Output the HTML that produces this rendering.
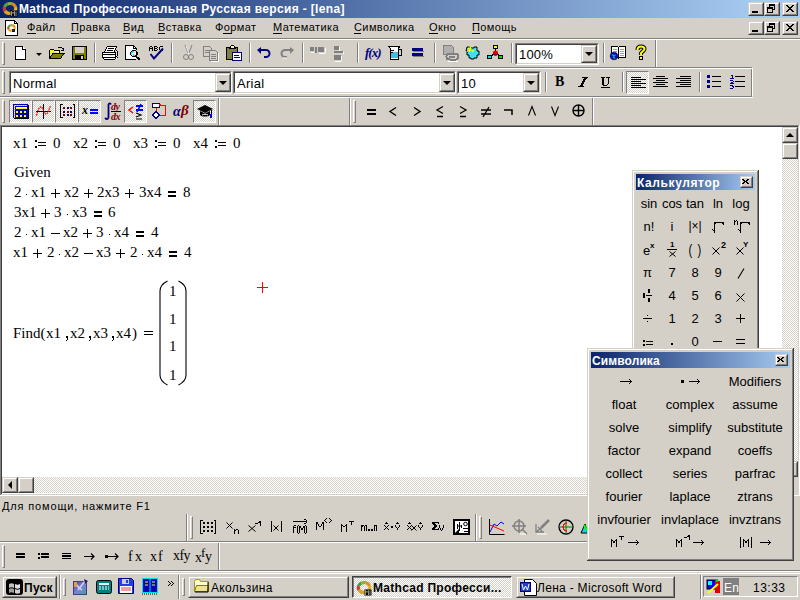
<!DOCTYPE html><html><head><meta charset="utf-8"><style>
*{margin:0;padding:0;box-sizing:border-box}
html,body{width:800px;height:600px;overflow:hidden;background:#D4D0C8;font-family:"Liberation Sans",sans-serif;font-size:11px;color:#000;position:relative}
.a{position:absolute}
.t{position:absolute;white-space:nowrap;line-height:1}
.hl{position:absolute;height:1px}
.vl{position:absolute;width:1px}
.dk{background:#808080}.wh{background:#fff}.dd{background:#404040}.bf{background:#D4D0C8}
.title{left:0;top:0;width:800px;height:18px;background:linear-gradient(to right,#0A246A 0px,#A6CAF0 760px)}
.cbtn{position:absolute;width:16px;height:14px;background:#D4D0C8;border-top:1px solid #fff;border-left:1px solid #fff;border-right:1px solid #404040;border-bottom:1px solid #404040;box-shadow:inset -1px -1px #808080}
.grip{position:absolute;width:3px;border-left:1px solid #fff;border-top:1px solid #fff;border-right:1px solid #808080;border-bottom:1px solid #808080}
.sep{position:absolute;width:2px;border-left:1px solid #808080;border-right:1px solid #fff}
.chk{background-color:#fff;background-image:linear-gradient(45deg,#D4D0C8 25%,transparent 25%,transparent 75%,#D4D0C8 75%),linear-gradient(45deg,#D4D0C8 25%,transparent 25%,transparent 75%,#D4D0C8 75%);background-size:2px 2px;background-position:0 0,1px 1px}
.pressed{position:absolute;border-top:1px solid #808080;border-left:1px solid #808080;border-right:1px solid #fff;border-bottom:1px solid #fff}
.combo{position:absolute;background:#fff;border-top:1px solid #808080;border-left:1px solid #808080;border-right:1px solid #fff;border-bottom:1px solid #fff}
.combo>.in{position:absolute;left:0;top:0;right:0;bottom:0;border-top:1px solid #404040;border-left:1px solid #404040;border-right:1px solid #D4D0C8;border-bottom:1px solid #D4D0C8}
.ddb{position:absolute;background:#D4D0C8;border-top:1px solid #D4D0C8;border-left:1px solid #D4D0C8;border-right:1px solid #404040;border-bottom:1px solid #404040}
.ddb>.in{position:absolute;left:0;top:0;right:0;bottom:0;border-top:1px solid #fff;border-left:1px solid #fff;border-right:1px solid #808080;border-bottom:1px solid #808080}
.tri{position:absolute;width:0;height:0;border-left:4px solid transparent;border-right:4px solid transparent;border-top:4px solid #000}
.btn3d{position:absolute;background:#D4D0C8;border-top:1px solid #D4D0C8;border-left:1px solid #D4D0C8;border-right:1px solid #404040;border-bottom:1px solid #404040}
.btn3d>.in{position:absolute;left:0;top:0;right:0;bottom:0;border-top:1px solid #fff;border-left:1px solid #fff;border-right:1px solid #808080;border-bottom:1px solid #808080}
.m{position:absolute;font-family:"Liberation Serif",serif;font-size:14px;white-space:nowrap;line-height:1}
.ptitle{position:absolute;background:linear-gradient(to right,#0A246A,#A6CAF0)}
.pt{position:absolute;font-size:12px;white-space:nowrap;line-height:1;text-align:center}
svg{position:absolute;overflow:visible}
</style></head><body>
<div class="a title"></div>
<svg style="left:2px;top:1px" width="16" height="16" viewBox="0 0 16 16"><path d="M2.98 10.00A5.8 5 0 0 1 2.55 5.79" stroke="#d03838" stroke-width="3.2" fill="none"/><path d="M2.55 5.79A5.8 5 0 0 1 5.55 2.97" stroke="#50a040" stroke-width="3.2" fill="none"/><path d="M5.55 2.97A5.8 5 0 0 1 9.98 2.80" stroke="#90b030" stroke-width="3.2" fill="none"/><path d="M9.98 2.80A5.8 5 0 0 1 13.45 5.79" stroke="#e08828" stroke-width="3.2" fill="none"/><path d="M13.45 5.79A5.8 5 0 0 1 13.02 10.00" stroke="#e8b020" stroke-width="3.2" fill="none"/><path d="M13.02 10.00A5.8 5 0 0 1 8.00 12.50" stroke="#e0d020" stroke-width="3.2" fill="none"/><path d="M8.00 12.50A5.8 5 0 0 1 2.98 10.00" stroke="#e0a020" stroke-width="3.2" fill="none"/><path d="M8.5 9.5h7v6h-7z" fill="#000"/><path d="M9.5 15v-4.5l1.5 2l1.5-2v4.5M14 10.5v4.5" stroke="#a0a0a0" fill="none" stroke-width="0.9"/></svg>
<div class="t" style="left:19px;top:3px;color:#fff;font-weight:bold;font-size:12px;letter-spacing:0.35px">Mathcad Профессиональная Русская версия - [lena]</div>
<div class="btn3d" style="left:748px;top:2px;width:16px;height:14px"><div class="in"></div><svg style="left:-1px;top:-1px" width="16" height="14" viewBox="0 0 16 14" shape-rendering="crispEdges"><rect x="4" y="9" width="6" height="2" fill="#000"/></svg></div>
<div class="btn3d" style="left:764px;top:2px;width:16px;height:14px"><div class="in"></div><svg style="left:-1px;top:-1px" width="16" height="14" viewBox="0 0 16 14" shape-rendering="crispEdges"><rect x="5" y="2" width="6" height="1" fill="#000"/><rect x="5" y="3" width="6" height="1" fill="#000"/><rect x="5" y="4" width="1" height="1" fill="#000"/><rect x="10" y="4" width="1" height="1" fill="#000"/><rect x="5" y="5" width="1" height="1" fill="#000"/><rect x="10" y="5" width="1" height="1" fill="#000"/><rect x="5" y="6" width="1" height="1" fill="#000"/><rect x="10" y="6" width="1" height="1" fill="#000"/><rect x="5" y="7" width="6" height="1" fill="#000"/><rect x="4" y="7" width="4" height="3" fill="#D4D0C8"/><rect x="3" y="5" width="6" height="1" fill="#000"/><rect x="3" y="6" width="6" height="1" fill="#000"/><rect x="3" y="7" width="1" height="1" fill="#000"/><rect x="8" y="7" width="1" height="1" fill="#000"/><rect x="3" y="8" width="1" height="1" fill="#000"/><rect x="8" y="8" width="1" height="1" fill="#000"/><rect x="3" y="9" width="1" height="1" fill="#000"/><rect x="8" y="9" width="1" height="1" fill="#000"/><rect x="3" y="10" width="6" height="1" fill="#000"/></svg></div>
<div class="btn3d" style="left:782px;top:2px;width:16px;height:14px"><div class="in"></div><svg style="left:-1px;top:-1px" width="16" height="14" viewBox="0 0 16 14" shape-rendering="crispEdges"><rect x="4" y="3" width="2" height="1" fill="#000"/><rect x="10" y="3" width="2" height="1" fill="#000"/><rect x="5" y="4" width="2" height="1" fill="#000"/><rect x="9" y="4" width="2" height="1" fill="#000"/><rect x="6" y="5" width="4" height="1" fill="#000"/><rect x="7" y="6" width="2" height="1" fill="#000"/><rect x="6" y="7" width="4" height="1" fill="#000"/><rect x="5" y="8" width="2" height="1" fill="#000"/><rect x="9" y="8" width="2" height="1" fill="#000"/><rect x="4" y="9" width="2" height="1" fill="#000"/><rect x="10" y="9" width="2" height="1" fill="#000"/></svg></div>
<svg style="left:4px;top:20px" width="16" height="16" viewBox="0 0 16 16" shape-rendering="crispEdges">
<path d="M1.5 0.5h9l3 3v11.5h-12z" fill="#fff" stroke="#000"/><path d="M10.5 0.5v3h3" fill="none" stroke="#000"/>
</svg>
<svg style="left:4px;top:20px" width="16" height="16" viewBox="0 0 16 16"><path d="M4.73 9.40A3.2 2.8 0 0 1 4.49 7.04" stroke="#d03838" stroke-width="2.2" fill="none"/><path d="M4.49 7.04A3.2 2.8 0 0 1 6.15 5.46" stroke="#50a040" stroke-width="2.2" fill="none"/><path d="M6.15 5.46A3.2 2.8 0 0 1 8.59 5.37" stroke="#90b030" stroke-width="2.2" fill="none"/><path d="M8.59 5.37A3.2 2.8 0 0 1 10.51 7.04" stroke="#e08828" stroke-width="2.2" fill="none"/><path d="M10.51 7.04A3.2 2.8 0 0 1 10.27 9.40" stroke="#e8b020" stroke-width="2.2" fill="none"/><path d="M10.27 9.40A3.2 2.8 0 0 1 7.50 10.80" stroke="#e0d020" stroke-width="2.2" fill="none"/><path d="M7.50 10.80A3.2 2.8 0 0 1 4.73 9.40" stroke="#e0a020" stroke-width="2.2" fill="none"/><rect x="8" y="9" width="3" height="3" fill="#202020"/></svg>
<div class="t" style="left:27px;top:22px;font-size:11px;letter-spacing:0.4px">Файл</div>
<div class="t" style="left:71px;top:22px;font-size:11px;letter-spacing:0.4px">Правка</div>
<div class="t" style="left:123px;top:22px;font-size:11px;letter-spacing:0.4px">Вид</div>
<div class="t" style="left:158px;top:22px;font-size:11px;letter-spacing:0.4px">Вставка</div>
<div class="t" style="left:215px;top:22px;font-size:11px;letter-spacing:0.4px">Формат</div>
<div class="t" style="left:273px;top:22px;font-size:11px;letter-spacing:0.4px">Математика</div>
<div class="t" style="left:354px;top:22px;font-size:11px;letter-spacing:0.4px">Символика</div>
<div class="t" style="left:429px;top:22px;font-size:11px;letter-spacing:0.4px">Окно</div>
<div class="t" style="left:472px;top:22px;font-size:11px;letter-spacing:0.4px">Помощь</div>
<div class="hl" style="left:27px;top:33px;width:9px;background:#000"></div>
<div class="hl" style="left:71px;top:33px;width:8px;background:#000"></div>
<div class="hl" style="left:123px;top:33px;width:7px;background:#000"></div>
<div class="hl" style="left:158px;top:33px;width:7px;background:#000"></div>
<div class="hl" style="left:223px;top:33px;width:9px;background:#000"></div>
<div class="hl" style="left:273px;top:33px;width:9px;background:#000"></div>
<div class="hl" style="left:354px;top:33px;width:7px;background:#000"></div>
<div class="hl" style="left:429px;top:33px;width:9px;background:#000"></div>
<div class="hl" style="left:472px;top:33px;width:8px;background:#000"></div>
<div class="btn3d" style="left:748px;top:21px;width:16px;height:14px"><div class="in"></div><svg style="left:-1px;top:-1px" width="16" height="14" viewBox="0 0 16 14" shape-rendering="crispEdges"><rect x="4" y="9" width="6" height="2" fill="#000"/></svg></div>
<div class="btn3d" style="left:764px;top:21px;width:16px;height:14px"><div class="in"></div><svg style="left:-1px;top:-1px" width="16" height="14" viewBox="0 0 16 14" shape-rendering="crispEdges"><rect x="5" y="2" width="6" height="1" fill="#000"/><rect x="5" y="3" width="6" height="1" fill="#000"/><rect x="5" y="4" width="1" height="1" fill="#000"/><rect x="10" y="4" width="1" height="1" fill="#000"/><rect x="5" y="5" width="1" height="1" fill="#000"/><rect x="10" y="5" width="1" height="1" fill="#000"/><rect x="5" y="6" width="1" height="1" fill="#000"/><rect x="10" y="6" width="1" height="1" fill="#000"/><rect x="5" y="7" width="6" height="1" fill="#000"/><rect x="4" y="7" width="4" height="3" fill="#D4D0C8"/><rect x="3" y="5" width="6" height="1" fill="#000"/><rect x="3" y="6" width="6" height="1" fill="#000"/><rect x="3" y="7" width="1" height="1" fill="#000"/><rect x="8" y="7" width="1" height="1" fill="#000"/><rect x="3" y="8" width="1" height="1" fill="#000"/><rect x="8" y="8" width="1" height="1" fill="#000"/><rect x="3" y="9" width="1" height="1" fill="#000"/><rect x="8" y="9" width="1" height="1" fill="#000"/><rect x="3" y="10" width="6" height="1" fill="#000"/></svg></div>
<div class="btn3d" style="left:782px;top:21px;width:16px;height:14px"><div class="in"></div><svg style="left:-1px;top:-1px" width="16" height="14" viewBox="0 0 16 14" shape-rendering="crispEdges"><rect x="4" y="3" width="2" height="1" fill="#000"/><rect x="10" y="3" width="2" height="1" fill="#000"/><rect x="5" y="4" width="2" height="1" fill="#000"/><rect x="9" y="4" width="2" height="1" fill="#000"/><rect x="6" y="5" width="4" height="1" fill="#000"/><rect x="7" y="6" width="2" height="1" fill="#000"/><rect x="6" y="7" width="4" height="1" fill="#000"/><rect x="5" y="8" width="2" height="1" fill="#000"/><rect x="9" y="8" width="2" height="1" fill="#000"/><rect x="4" y="9" width="2" height="1" fill="#000"/><rect x="10" y="9" width="2" height="1" fill="#000"/></svg></div>
<div class="hl" style="left:0px;top:38px;width:800px;background:#808080"></div>
<div class="hl" style="left:0px;top:39px;width:800px;background:#fff"></div>
<div class="vl" style="left:655px;top:40px;height:27px;background:#808080"></div>
<div class="vl" style="left:656px;top:40px;height:27px;background:#fff"></div>
<div class="hl" style="left:0px;top:67px;width:752px;background:#808080"></div>
<div class="hl" style="left:0px;top:68px;width:753px;background:#fff"></div>
<div class="vl" style="left:751px;top:69px;height:27px;background:#808080"></div>
<div class="vl" style="left:752px;top:68px;height:28px;background:#fff"></div>
<div class="hl" style="left:0px;top:96px;width:752px;background:#808080"></div>
<div class="hl" style="left:0px;top:97px;width:753px;background:#fff"></div>
<div class="vl" style="left:218px;top:98px;height:27px;background:#808080"></div>
<div class="vl" style="left:219px;top:98px;height:27px;background:#fff"></div>
<div class="vl" style="left:592px;top:98px;height:27px;background:#808080"></div>
<div class="vl" style="left:593px;top:98px;height:27px;background:#fff"></div>
<div class="vl" style="left:349px;top:98px;height:27px;background:#808080"></div>
<div class="vl" style="left:350px;top:98px;height:27px;background:#fff"></div>
<div class="grip" style="left:2px;top:42px;height:23px"></div>
<div class="grip" style="left:2px;top:71px;height:23px"></div>
<div class="grip" style="left:2px;top:100px;height:23px"></div>
<div class="grip" style="left:353px;top:100px;height:23px"></div>
<svg style="left:15px;top:46px" width="12" height="14" viewBox="0 0 12 14" shape-rendering="crispEdges"><path d="M0.5 0.5h7l3 3v9.5h-10z" fill="#fff" stroke="#000"/><path d="M7.5 0.5v3h3" fill="#fff" stroke="#000"/></svg>
<div class="tri" style="left:36px;top:53px;border-left-width:3px;border-right-width:3px;border-top-width:3px"></div>
<svg style="left:49px;top:45px" width="16" height="15" viewBox="0 0 16 15" shape-rendering="crispEdges"><path d="M9 2h3l2 2" stroke="#000" fill="none"/><path d="M14 3v2h-2" stroke="#000" fill="none"/><path d="M0.5 4.5h4l1 1h5v3" fill="#ffff80" stroke="#000"/><path d="M0.5 4.5v9h11l3.5-5h-11l-3.5 5" fill="#808000" stroke="#000"/><rect x="1" y="5" width="3" height="3" fill="#ffff00"/></svg>
<svg style="left:72px;top:46px" width="15" height="14" viewBox="0 0 15 14" shape-rendering="crispEdges"><rect x="0.5" y="0.5" width="14" height="13" fill="#808000" stroke="#000"/><rect x="3" y="1" width="9" height="6" fill="#d4d0c8"/><rect x="3" y="9" width="9" height="4" fill="#000"/><rect x="9" y="10" width="2" height="3" fill="#d4d0c8"/></svg>
<div class="sep" style="left:94px;top:43px;height:20px"></div>
<svg style="left:102px;top:46px" width="16" height="14" viewBox="0 0 16 14" shape-rendering="crispEdges"><rect x="5" y="0" width="10" height="1" fill="#000"/><rect x="4" y="1" width="1" height="1" fill="#000"/><rect x="14" y="1" width="1" height="1" fill="#000"/><rect x="4" y="2" width="1" height="1" fill="#000"/><rect x="6" y="2" width="6" height="1" fill="#000"/><rect x="13" y="2" width="1" height="1" fill="#000"/><rect x="3" y="3" width="1" height="1" fill="#000"/><rect x="13" y="3" width="1" height="1" fill="#000"/><rect x="3" y="4" width="1" height="1" fill="#000"/><rect x="5" y="4" width="6" height="1" fill="#000"/><rect x="12" y="4" width="1" height="1" fill="#000"/><rect x="14" y="4" width="1" height="1" fill="#000"/><rect x="2" y="5" width="1" height="1" fill="#000"/><rect x="12" y="5" width="1" height="1" fill="#000"/><rect x="15" y="5" width="1" height="1" fill="#000"/><rect x="0" y="6" width="14" height="1" fill="#000"/><rect x="15" y="6" width="1" height="1" fill="#000"/><rect x="0" y="7" width="1" height="1" fill="#000"/><rect x="13" y="7" width="1" height="1" fill="#000"/><rect x="15" y="7" width="1" height="1" fill="#000"/><rect x="0" y="8" width="14" height="1" fill="#000"/><rect x="15" y="8" width="1" height="1" fill="#000"/><rect x="0" y="9" width="1" height="1" fill="#000"/><rect x="13" y="9" width="1" height="1" fill="#000"/><rect x="15" y="9" width="1" height="1" fill="#000"/><rect x="0" y="10" width="1" height="1" fill="#000"/><rect x="13" y="10" width="2" height="1" fill="#000"/><rect x="0" y="11" width="14" height="1" fill="#000"/><rect x="15" y="11" width="1" height="1" fill="#000"/><rect x="1" y="12" width="1" height="1" fill="#000"/><rect x="13" y="12" width="1" height="1" fill="#000"/><rect x="2" y="13" width="11" height="1" fill="#000"/><rect x="5" y="1" width="9" height="1" fill="#fff"/><rect x="5" y="2" width="1" height="1" fill="#fff"/><rect x="12" y="2" width="1" height="1" fill="#fff"/><rect x="4" y="3" width="9" height="1" fill="#fff"/><rect x="4" y="4" width="1" height="1" fill="#fff"/><rect x="11" y="4" width="1" height="1" fill="#fff"/><rect x="3" y="5" width="9" height="1" fill="#fff"/><rect x="14" y="5" width="1" height="1" fill="#fff"/><rect x="1" y="7" width="12" height="1" fill="#fff"/><rect x="14" y="7" width="1" height="1" fill="#fff"/><rect x="1" y="9" width="6" height="1" fill="#fff"/><rect x="11" y="9" width="2" height="1" fill="#fff"/><rect x="14" y="9" width="1" height="1" fill="#fff"/><rect x="1" y="10" width="12" height="1" fill="#fff"/><rect x="14" y="11" width="1" height="1" fill="#fff"/><rect x="2" y="12" width="11" height="1" fill="#fff"/><rect x="14" y="12" width="1" height="1" fill="#fff"/><rect x="7" y="9" width="4" height="1" fill="#ffff00"/></svg>
<svg style="left:125px;top:45px" width="15" height="15" viewBox="0 0 15 15" shape-rendering="crispEdges"><rect x="0" y="0" width="9" height="1" fill="#000"/><rect x="0" y="1" width="1" height="1" fill="#000"/><rect x="8" y="1" width="2" height="1" fill="#000"/><rect x="0" y="2" width="1" height="1" fill="#000"/><rect x="8" y="2" width="1" height="1" fill="#000"/><rect x="10" y="2" width="1" height="1" fill="#000"/><rect x="0" y="3" width="1" height="1" fill="#000"/><rect x="8" y="3" width="4" height="1" fill="#000"/><rect x="0" y="4" width="1" height="1" fill="#000"/><rect x="11" y="4" width="1" height="1" fill="#000"/><rect x="0" y="5" width="1" height="1" fill="#000"/><rect x="7" y="5" width="4" height="1" fill="#000"/><rect x="0" y="6" width="1" height="1" fill="#000"/><rect x="6" y="6" width="1" height="1" fill="#000"/><rect x="11" y="6" width="1" height="1" fill="#000"/><rect x="0" y="7" width="1" height="1" fill="#000"/><rect x="5" y="7" width="1" height="1" fill="#000"/><rect x="11" y="7" width="2" height="1" fill="#000"/><rect x="0" y="8" width="1" height="1" fill="#000"/><rect x="5" y="8" width="1" height="1" fill="#000"/><rect x="11" y="8" width="2" height="1" fill="#000"/><rect x="0" y="9" width="1" height="1" fill="#000"/><rect x="5" y="9" width="1" height="1" fill="#000"/><rect x="11" y="9" width="2" height="1" fill="#000"/><rect x="0" y="10" width="1" height="1" fill="#000"/><rect x="6" y="10" width="1" height="1" fill="#000"/><rect x="10" y="10" width="2" height="1" fill="#000"/><rect x="0" y="11" width="1" height="1" fill="#000"/><rect x="7" y="11" width="5" height="1" fill="#000"/><rect x="0" y="12" width="1" height="1" fill="#000"/><rect x="11" y="12" width="3" height="1" fill="#000"/><rect x="0" y="13" width="1" height="1" fill="#000"/><rect x="12" y="13" width="3" height="1" fill="#000"/><rect x="0" y="14" width="11" height="1" fill="#000"/><rect x="13" y="14" width="2" height="1" fill="#000"/><rect x="1" y="1" width="7" height="1" fill="#fff"/><rect x="1" y="2" width="7" height="1" fill="#fff"/><rect x="9" y="2" width="1" height="1" fill="#fff"/><rect x="1" y="3" width="7" height="1" fill="#fff"/><rect x="1" y="4" width="10" height="1" fill="#fff"/><rect x="1" y="5" width="6" height="1" fill="#fff"/><rect x="1" y="6" width="5" height="1" fill="#fff"/><rect x="1" y="7" width="4" height="1" fill="#fff"/><rect x="1" y="8" width="4" height="1" fill="#fff"/><rect x="10" y="8" width="1" height="1" fill="#fff"/><rect x="1" y="9" width="4" height="1" fill="#fff"/><rect x="10" y="9" width="1" height="1" fill="#fff"/><rect x="1" y="10" width="5" height="1" fill="#fff"/><rect x="1" y="11" width="6" height="1" fill="#fff"/><rect x="1" y="12" width="10" height="1" fill="#fff"/><rect x="1" y="13" width="10" height="1" fill="#fff"/><rect x="7" y="6" width="2" height="1" fill="#00e8f0"/><rect x="6" y="7" width="2" height="1" fill="#00e8f0"/><rect x="6" y="8" width="1" height="1" fill="#00e8f0"/><rect x="8" y="9" width="1" height="1" fill="#00e8f0"/><rect x="8" y="10" width="2" height="1" fill="#00e8f0"/><rect x="9" y="6" width="2" height="1" fill="#f0e0e0"/><rect x="8" y="7" width="3" height="1" fill="#f0e0e0"/><rect x="7" y="8" width="3" height="1" fill="#f0e0e0"/><rect x="6" y="9" width="2" height="1" fill="#f0e0e0"/><rect x="9" y="9" width="1" height="1" fill="#f0e0e0"/><rect x="7" y="10" width="1" height="1" fill="#f0e0e0"/></svg>
<svg style="left:149px;top:46px" width="14" height="5" viewBox="0 0 14 5" shape-rendering="crispEdges"><rect x="1" y="0" width="2" height="1" fill="#000"/><rect x="5" y="0" width="3" height="1" fill="#000"/><rect x="11" y="0" width="3" height="1" fill="#000"/><rect x="0" y="1" width="1" height="1" fill="#000"/><rect x="3" y="1" width="1" height="1" fill="#000"/><rect x="5" y="1" width="1" height="1" fill="#000"/><rect x="8" y="1" width="1" height="1" fill="#000"/><rect x="10" y="1" width="1" height="1" fill="#000"/><rect x="0" y="2" width="4" height="1" fill="#000"/><rect x="5" y="2" width="3" height="1" fill="#000"/><rect x="10" y="2" width="1" height="1" fill="#000"/><rect x="0" y="3" width="1" height="1" fill="#000"/><rect x="3" y="3" width="1" height="1" fill="#000"/><rect x="5" y="3" width="1" height="1" fill="#000"/><rect x="8" y="3" width="1" height="1" fill="#000"/><rect x="10" y="3" width="1" height="1" fill="#000"/><rect x="0" y="4" width="1" height="1" fill="#000"/><rect x="3" y="4" width="1" height="1" fill="#000"/><rect x="5" y="4" width="3" height="1" fill="#000"/><rect x="11" y="4" width="3" height="1" fill="#000"/></svg>
<svg style="left:149px;top:48px" width="15" height="12" viewBox="0 0 15 12"><path d="M1.5 6l3.5 4.5l9-10" stroke="#000080" stroke-width="2" fill="none"/></svg>
<div class="sep" style="left:171px;top:43px;height:20px"></div>
<svg style="left:183px;top:45px" width="11" height="16" viewBox="0 0 11 16"><path d="M2 0l3 8M9 0l-3 8" stroke="#808080" fill="none"/><circle cx="3" cy="12" r="2.5" fill="none" stroke="#808080"/><circle cx="8" cy="12" r="2.5" fill="none" stroke="#808080"/><path d="M3 1l3 8" stroke="#fff" fill="none" opacity="0.7"/></svg>
<svg style="left:203px;top:46px" width="16" height="15" viewBox="0 0 16 15" shape-rendering="crispEdges"><path d="M0.5 0.5h6l2 2v8h-8z" fill="#d4d0c8" stroke="#808080"/><path d="M6.5 4.5h6l2 2v8h-8z" fill="#d4d0c8" stroke="#808080"/><path d="M2 4h4M2 6h4M8 8h5M8 10h5M8 12h5" stroke="#808080"/><path d="M7.5 15.5h8v-9" stroke="#fff" fill="none"/></svg>
<svg style="left:226px;top:45px" width="16" height="16" viewBox="0 0 16 16" shape-rendering="crispEdges"><rect x="0.5" y="2.5" width="11" height="12" fill="#808040" stroke="#000"/><path d="M3.5 3.5l2-3h2l2 3z" fill="#ffff80" stroke="#000"/><rect x="6.5" y="7.5" width="9" height="8" fill="#fff" stroke="#000080"/><path d="M8 10h5M8 12h6" stroke="#000080"/></svg>
<div class="sep" style="left:249px;top:43px;height:20px"></div>
<svg style="left:257px;top:47px" width="14" height="10" viewBox="0 0 14 10"><path d="M3 3h6a3.5 3.5 0 0 1 0 7h-2" stroke="#000080" stroke-width="2" fill="none"/><path d="M0 3l4-3v7z" fill="#000080"/></svg>
<svg style="left:280px;top:47px" width="15" height="11" viewBox="0 0 15 11"><path d="M11 3h-6a3.5 3.5 0 0 0 0 7h2" stroke="#808080" stroke-width="2" fill="none"/><path d="M14 3l-4-3v7z" fill="#808080"/><path d="M3 11h4" stroke="#fff"/></svg>
<div class="sep" style="left:302px;top:43px;height:20px"></div>
<svg style="left:310px;top:46px" width="17" height="10" viewBox="0 0 17 10" shape-rendering="crispEdges"><rect x="0" y="1" width="4" height="4" fill="#808080"/><rect x="5" y="1" width="2" height="6" fill="#808080"/><rect x="8" y="1" width="6" height="5" fill="#808080"/><path d="M1 6h3M15 2v5M9 7h6" stroke="#fff"/></svg>
<svg style="left:333px;top:46px" width="11" height="16" viewBox="0 0 11 16" shape-rendering="crispEdges"><rect x="1" y="0" width="5" height="4" fill="#808080"/><rect x="1" y="5" width="9" height="2" fill="#808080"/><rect x="1" y="9" width="7" height="5" fill="#808080"/><path d="M6 1v4M10 6v2M8 10v5M2 15h6" stroke="#fff"/></svg>
<div class="sep" style="left:357px;top:43px;height:20px"></div>
<div class="t" style="left:365px;top:46px;font-family:'Liberation Serif',serif;font-style:italic;font-weight:bold;font-size:13px;color:#000080;letter-spacing:-1px">f(x)</div>
<svg style="left:388px;top:46px" width="15" height="15" viewBox="0 0 15 15" shape-rendering="crispEdges"><path d="M0.5 0.5h11l-1 2v10.5h-8v-10.5z" fill="#fff" stroke="#000"/><path d="M11 3h2.5v6h-2.5" stroke="#000" fill="none"/><rect x="3" y="6" width="7" height="6" fill="#40c0e0"/><path d="M3 4h3M3 6h2" stroke="#000"/></svg>
<svg style="left:412px;top:48px" width="13" height="9" viewBox="0 0 13 9" shape-rendering="crispEdges"><rect x="0" y="0" width="11" height="3" fill="#000080"/><rect x="0" y="5" width="11" height="3" fill="#000080"/><rect x="1" y="3" width="11" height="1" fill="#808080"/><rect x="1" y="8" width="11" height="1" fill="#808080"/></svg>
<div class="sep" style="left:434px;top:43px;height:20px"></div>
<svg style="left:443px;top:45px" width="16" height="16" viewBox="0 0 16 16" shape-rendering="crispEdges"><path d="M0.5 0.5h8l2 2v7h-10z" fill="#b0b0b0" stroke="#808080"/><rect x="3.5" y="8.5" width="12" height="6" rx="3" fill="#d4d0c8" stroke="#808080" stroke-width="2"/><path d="M6 11.5h6" stroke="#808080" stroke-width="2"/><path d="M5 16h10" stroke="#fff"/></svg>
<svg style="left:465px;top:45px" width="16" height="15" viewBox="0 0 16 15"><path d="M2 2h4v1h3v-1h3v4h2v4h-2v3h-3v1h-3v-1h-2v-3h-2v-3h1v-1h-2z" fill="#40e0f0" stroke="#000"/><path d="M3 3l3 3M5 1l1 3M2 6h3M9 5l-2 2" stroke="#ffff00" stroke-width="1.3"/></svg>
<svg style="left:487px;top:45px" width="16" height="15" viewBox="0 0 16 15" shape-rendering="crispEdges"><rect x="6.5" y="0.5" width="4" height="3" fill="#ffff00" stroke="#000"/><path d="M8.5 4v3M3 12l5-4M14 12l-5-4" stroke="#000"/><rect x="0.5" y="10.5" width="4" height="3" fill="#00e0e0" stroke="#000"/><rect x="11.5" y="10.5" width="4" height="3" fill="#00e000" stroke="#000"/></svg>
<svg style="left:487px;top:45px" width="16" height="15" viewBox="0 0 16 15"><circle cx="8.5" cy="8" r="2.6" fill="#e00000"/><path d="M6.5 9a2.5 2.5 0 0 0 4 0" stroke="#000080" fill="none"/></svg>
<div class="sep" style="left:511px;top:43px;height:20px"></div>
<div class="combo" style="left:515px;top:43px;width:84px;height:22px"><div class="in"></div></div>
<div class="t" style="left:519px;top:48px;font-size:13px;letter-spacing:0.2px">100%</div>
<div class="btn3d" style="left:581px;top:45px;width:16px;height:18px"><div class="in"></div><div class="tri" style="left:3px;top:6px"></div></div>
<div class="sep" style="left:603px;top:43px;height:20px"></div>
<svg style="left:610px;top:45px" width="17" height="15" viewBox="0 0 17 15" shape-rendering="crispEdges"><path d="M1.5 1.5h6l1 1l1-1h6v11h-6l-1 1l-1-1h-6z" fill="#fff" stroke="#000"/><path d="M8.5 2v11" stroke="#000"/><path d="M3 4h4M3 6h4M10 4h4M10 6h4M10 8h4M10 10h4" stroke="#a0a0a0"/></svg>
<svg style="left:610px;top:52px" width="8" height="8" viewBox="0 0 8 8"><circle cx="4" cy="4" r="3.8" fill="#0000ff" stroke="#000" stroke-width="0.6"/><path d="M2 2.5l2 1.5l1.5-1M3 5l2 1.5" stroke="#00e000" stroke-width="1.3" fill="none"/></svg>
<svg style="left:635px;top:45px" width="12" height="15" viewBox="0 0 12 15"><path d="M2.5 5C2.5 2 4 1.5 6 1.5S9.5 2.5 9.5 4S8 6 6.5 7.5S6 9 6 10" stroke="#000" stroke-width="4" fill="none"/><rect x="4" y="11" width="4" height="4" fill="#000"/><path d="M2.5 5C2.5 2 4 1.5 6 1.5S9.5 2.5 9.5 4S8 6 6.5 7.5S6 9 6 10" stroke="#ffff00" stroke-width="2" fill="none"/><rect x="5" y="12" width="2" height="2" fill="#ffff00"/></svg>
<div class="combo" style="left:9px;top:71px;width:223px;height:23px"><div class="in"></div></div>
<div class="t" style="left:13px;top:77px;font-size:13px;letter-spacing:0.3px">Normal</div>
<div class="btn3d" style="left:215px;top:73px;width:16px;height:19px"><div class="in"></div><div class="tri" style="left:3px;top:7px"></div></div>
<div class="combo" style="left:233px;top:71px;width:223px;height:23px"><div class="in"></div></div>
<div class="t" style="left:237px;top:77px;font-size:13px;letter-spacing:0.3px">Arial</div>
<div class="btn3d" style="left:439px;top:73px;width:16px;height:19px"><div class="in"></div><div class="tri" style="left:3px;top:7px"></div></div>
<div class="combo" style="left:457px;top:71px;width:84px;height:23px"><div class="in"></div></div>
<div class="t" style="left:461px;top:77px;font-size:13px;letter-spacing:0.3px">10</div>
<div class="btn3d" style="left:523px;top:73px;width:16px;height:19px"><div class="in"></div><div class="tri" style="left:3px;top:7px"></div></div>
<div class="sep" style="left:545px;top:72px;height:20px"></div>
<div class="t" style="left:555px;top:75px;font-family:'Liberation Serif',serif;font-weight:bold;font-size:14px">B</div>
<svg style="left:578px;top:77px" width="10" height="10" viewBox="0 0 10 10" shape-rendering="crispEdges"><rect x="4" y="0" width="6" height="1" fill="#000"/><rect x="6" y="1" width="3" height="1" fill="#000"/><rect x="5" y="2" width="3" height="1" fill="#000"/><rect x="5" y="3" width="2" height="1" fill="#000"/><rect x="4" y="4" width="3" height="1" fill="#000"/><rect x="4" y="5" width="2" height="1" fill="#000"/><rect x="3" y="6" width="3" height="1" fill="#000"/><rect x="3" y="7" width="2" height="1" fill="#000"/><rect x="2" y="8" width="3" height="1" fill="#000"/><rect x="0" y="9" width="6" height="1" fill="#000"/></svg>
<svg style="left:601px;top:77px" width="9" height="11" viewBox="0 0 9 11" shape-rendering="crispEdges"><rect x="0" y="0" width="4" height="1" fill="#000"/><rect x="5" y="0" width="4" height="1" fill="#000"/><rect x="1" y="1" width="2" height="1" fill="#000"/><rect x="7" y="1" width="1" height="1" fill="#000"/><rect x="1" y="2" width="2" height="1" fill="#000"/><rect x="7" y="2" width="1" height="1" fill="#000"/><rect x="1" y="3" width="2" height="1" fill="#000"/><rect x="7" y="3" width="1" height="1" fill="#000"/><rect x="1" y="4" width="2" height="1" fill="#000"/><rect x="7" y="4" width="1" height="1" fill="#000"/><rect x="1" y="5" width="2" height="1" fill="#000"/><rect x="7" y="5" width="1" height="1" fill="#000"/><rect x="1" y="6" width="2" height="1" fill="#000"/><rect x="7" y="6" width="1" height="1" fill="#000"/><rect x="1" y="7" width="2" height="1" fill="#000"/><rect x="6" y="7" width="1" height="1" fill="#000"/><rect x="2" y="8" width="4" height="1" fill="#000"/><rect x="0" y="10" width="9" height="1" fill="#000"/></svg>
<div class="sep" style="left:622px;top:72px;height:20px"></div>
<div class="pressed chk" style="left:626px;top:71px;width:23px;height:23px"></div>
<svg style="left:631px;top:77px" width="16" height="12" viewBox="0 0 16 12" shape-rendering="crispEdges"><rect x="0" y="0" width="10" height="1" fill="#000"/><rect x="0" y="2" width="15" height="1" fill="#000"/><rect x="0" y="4" width="10" height="1" fill="#000"/><rect x="0" y="6" width="15" height="1" fill="#000"/><rect x="0" y="8" width="10" height="1" fill="#000"/><rect x="0" y="10" width="15" height="1" fill="#000"/></svg>
<svg style="left:653px;top:76px" width="16" height="12" viewBox="0 0 16 12" shape-rendering="crispEdges"><rect x="3" y="0" width="9" height="1" fill="#000"/><rect x="0" y="2" width="15" height="1" fill="#000"/><rect x="3" y="4" width="9" height="1" fill="#000"/><rect x="0" y="6" width="15" height="1" fill="#000"/><rect x="3" y="8" width="9" height="1" fill="#000"/><rect x="0" y="10" width="15" height="1" fill="#000"/></svg>
<svg style="left:676px;top:76px" width="16" height="12" viewBox="0 0 16 12" shape-rendering="crispEdges"><rect x="4" y="0" width="11" height="1" fill="#000"/><rect x="0" y="2" width="15" height="1" fill="#000"/><rect x="4" y="4" width="11" height="1" fill="#000"/><rect x="0" y="6" width="15" height="1" fill="#000"/><rect x="4" y="8" width="11" height="1" fill="#000"/><rect x="0" y="10" width="15" height="1" fill="#000"/></svg>
<div class="sep" style="left:699px;top:72px;height:20px"></div>
<svg style="left:707px;top:75px" width="14" height="13" viewBox="0 0 14 13" shape-rendering="crispEdges"><rect x="0" y="0" width="3" height="3" fill="#000080"/><rect x="0" y="5" width="3" height="3" fill="#000080"/><rect x="0" y="10" width="3" height="3" fill="#000080"/><rect x="5" y="1" width="9" height="1" fill="#000"/><rect x="5" y="6" width="9" height="1" fill="#000"/><rect x="5" y="11" width="9" height="1" fill="#000"/></svg>
<svg style="left:730px;top:75px" width="4" height="14" viewBox="0 0 4 14" shape-rendering="crispEdges"><rect x="1" y="0" width="2" height="1" fill="#000080"/><rect x="2" y="1" width="1" height="1" fill="#000080"/><rect x="2" y="2" width="1" height="1" fill="#000080"/><rect x="0" y="3" width="4" height="1" fill="#000080"/><rect x="0" y="5" width="3" height="1" fill="#000080"/><rect x="3" y="6" width="1" height="1" fill="#000080"/><rect x="1" y="7" width="2" height="1" fill="#000080"/><rect x="0" y="8" width="4" height="1" fill="#000080"/><rect x="0" y="10" width="3" height="1" fill="#000080"/><rect x="2" y="11" width="2" height="1" fill="#000080"/><rect x="3" y="12" width="1" height="1" fill="#000080"/><rect x="0" y="13" width="3" height="1" fill="#000080"/></svg>
<svg style="left:735px;top:76px" width="10" height="11" viewBox="0 0 10 11" shape-rendering="crispEdges"><rect x="0" y="0" width="10" height="1" fill="#000"/><rect x="0" y="5" width="10" height="1" fill="#000"/><rect x="0" y="10" width="10" height="1" fill="#000"/></svg>
<div class="pressed chk" style="left:9px;top:100px;width:23px;height:23px"></div>
<div class="pressed chk" style="left:32px;top:100px;width:23px;height:23px"></div>
<div class="pressed chk" style="left:55px;top:100px;width:23px;height:23px"></div>
<div class="pressed chk" style="left:78px;top:100px;width:23px;height:23px"></div>
<div class="pressed chk" style="left:124px;top:100px;width:23px;height:23px"></div>
<div class="pressed chk" style="left:193px;top:100px;width:23px;height:23px"></div>
<svg style="left:13px;top:104px" width="16" height="15" viewBox="0 0 16 15" shape-rendering="crispEdges"><rect x="0" y="0" width="15" height="14" fill="#0000b0"/><rect x="15" y="1" width="1" height="14" fill="#000"/><rect x="1" y="14" width="15" height="1" fill="#000"/><rect x="1" y="1" width="1" height="1" fill="#00ffff"/><rect x="1" y="2" width="1" height="1" fill="#fff"/><rect x="1" y="3" width="1" height="1" fill="#00ffff"/><rect x="1" y="4" width="1" height="1" fill="#fff"/><rect x="1" y="5" width="1" height="1" fill="#00ffff"/><rect x="1" y="6" width="1" height="1" fill="#fff"/><rect x="1" y="7" width="1" height="1" fill="#00ffff"/><rect x="1" y="8" width="1" height="1" fill="#fff"/><rect x="1" y="9" width="1" height="1" fill="#00ffff"/><rect x="1" y="10" width="1" height="1" fill="#fff"/><rect x="1" y="11" width="1" height="1" fill="#00ffff"/><rect x="1" y="12" width="1" height="1" fill="#fff"/><rect x="1" y="13" width="1" height="1" fill="#00ffff"/><rect x="1" y="1" width="1" height="1" fill="#00ffff"/><rect x="2" y="1" width="1" height="1" fill="#fff"/><rect x="3" y="1" width="1" height="1" fill="#00ffff"/><rect x="4" y="1" width="1" height="1" fill="#fff"/><rect x="5" y="1" width="1" height="1" fill="#00ffff"/><rect x="6" y="1" width="1" height="1" fill="#fff"/><rect x="7" y="1" width="1" height="1" fill="#00ffff"/><rect x="8" y="1" width="1" height="1" fill="#fff"/><rect x="9" y="1" width="1" height="1" fill="#00ffff"/><rect x="10" y="1" width="1" height="1" fill="#fff"/><rect x="11" y="1" width="1" height="1" fill="#00ffff"/><rect x="12" y="1" width="1" height="1" fill="#fff"/><rect x="13" y="1" width="1" height="1" fill="#00ffff"/><rect x="3" y="3" width="11" height="2" fill="#ffff00"/><rect x="3" y="3" width="11" height="1" fill="#ffffa0"/><rect x="3" y="7" width="2" height="2" fill="#ffff00"/><rect x="7" y="7" width="2" height="2" fill="#ffff00"/><rect x="11" y="7" width="2" height="2" fill="#ffff00"/><rect x="3" y="11" width="2" height="2" fill="#ffff00"/><rect x="7" y="11" width="2" height="2" fill="#ffff00"/><rect x="11" y="11" width="2" height="2" fill="#ffff00"/></svg>
<svg style="left:36px;top:104px" width="16" height="16" viewBox="0 0 16 16"><path d="M7.5 0v15M0 7.5h15" stroke="#000" stroke-width="1"/><path d="M0.5 11.5C2 6 3 3 5 3S8 10 10 10S13 5 14.5 2" stroke="#ff0000" stroke-width="1.3" fill="none" stroke-dasharray="1.5 0.7"/></svg>
<svg style="left:60px;top:104px" width="15" height="14" viewBox="0 0 15 14" shape-rendering="crispEdges"><path d="M2.5 0.5h-2v13h2M12.5 0.5h2v13h-2" stroke="#000" fill="none"/><rect x="3" y="3" width="2" height="2" fill="#800000"/><rect x="6.5" y="3" width="2" height="2" fill="#000080"/><rect x="10" y="3" width="2" height="2" fill="#800000"/><rect x="3" y="6.5" width="2" height="2" fill="#000080"/><rect x="6.5" y="6.5" width="2" height="2" fill="#800000"/><rect x="10" y="6.5" width="2" height="2" fill="#000080"/><rect x="3" y="10" width="2" height="2" fill="#800000"/><rect x="6.5" y="10" width="2" height="2" fill="#000080"/><rect x="10" y="10" width="2" height="2" fill="#800000"/></svg>
<div class="t" style="left:82px;top:104px;font-family:'Liberation Serif',serif;font-style:italic;font-weight:bold;font-size:12px">x</div>
<svg style="left:90px;top:109px" width="8" height="5" viewBox="0 0 8 5" shape-rendering="crispEdges"><rect x="0" y="0" width="8" height="2" fill="#0000ff"/><rect x="0" y="3" width="8" height="2" fill="#0000ff"/></svg>
<svg style="left:103px;top:102px" width="9" height="19" viewBox="0 0 9 19"><path d="M8 2.5C7.5 1 6 1 5.5 2.5V15.5C5 17.5 3.5 17.5 2 16" stroke="#000080" stroke-width="1.8" fill="none"/></svg>
<div class="t" style="left:111px;top:102px;font-family:'Liberation Serif',serif;font-size:10px;color:#800000;font-weight:bold;letter-spacing:-0.5px"><i>dy</i></div>
<div class="hl" style="left:111px;top:111px;width:10px;background:#000"></div>
<div class="t" style="left:111px;top:112px;font-family:'Liberation Serif',serif;font-size:10px;color:#800000;font-weight:bold;letter-spacing:-0.5px"><i>dx</i></div>
<svg style="left:128px;top:104px" width="15" height="16" viewBox="0 0 15 16"><path d="M5 3l-4 3l4 3" stroke="#ff0000" stroke-width="1.5" fill="none"/><rect x="8" y="1" width="7" height="2" fill="#0000ff"/><rect x="8" y="5" width="7" height="2" fill="#0000ff"/><path d="M13 0l-4 8" stroke="#0000ff" stroke-width="1.5"/><path d="M8 9l5 2l-5 2M8 15h6" stroke="#000" stroke-width="1.2" fill="none"/></svg>
<svg style="left:151px;top:103px" width="16" height="17" viewBox="0 0 16 17" shape-rendering="crispEdges"><rect x="1.5" y="0.5" width="7" height="4" fill="#fff" stroke="#000080"/><path d="M5 5v3" stroke="#ff0000"/><path d="M5 8.5l3.5 3.5l-3.5 3.5l-3.5-3.5z" fill="#fff" stroke="#000080"/><path d="M9 12h5v-10h-4" stroke="#ff0000" fill="none"/><path d="M10 1l-2 1l2 1" fill="#ff0000" stroke="#ff0000"/></svg>
<div class="t" style="left:173px;top:105px;font-family:'Liberation Serif',serif;font-style:italic;font-weight:bold;font-size:14px;color:#000080">α</div>
<div class="t" style="left:181px;top:103px;font-family:'Liberation Serif',serif;font-style:italic;font-weight:bold;font-size:15px;color:#800000">β</div>
<svg style="left:197px;top:104px" width="16" height="15" viewBox="0 0 16 15"><path d="M0 5l8-4l8 4l-8 4z" fill="#000"/><path d="M3 7v4c2 2 8 2 10 0v-4l-5 2.5z" fill="#000"/><path d="M5 11c2-1 4-1 6 0" stroke="#fff" fill="none"/><rect x="14" y="6" width="1" height="6" fill="#000"/><rect x="13" y="10" width="2" height="4" fill="#0000ff"/></svg>
<svg style="left:367px;top:109px" width="9" height="6" viewBox="0 0 9 6" shape-rendering="crispEdges"><rect x="0" y="0" width="9" height="2" fill="#000"/><rect x="0" y="4" width="9" height="2" fill="#000"/></svg>
<svg style="left:389px;top:107px" width="8" height="9" viewBox="0 0 8 9"><path d="M7 0.5l-6 4l6 4" stroke="#000" stroke-width="1.4" fill="none"/></svg>
<svg style="left:413px;top:107px" width="8" height="9" viewBox="0 0 8 9"><path d="M1 0.5l6 4l-6 4" stroke="#000" stroke-width="1.4" fill="none"/></svg>
<svg style="left:436px;top:106px" width="8" height="12" viewBox="0 0 8 12"><path d="M7 0.5l-6 3.5l6 3.5M1 10.5h6" stroke="#000" stroke-width="1.3" fill="none"/></svg>
<svg style="left:459px;top:106px" width="8" height="12" viewBox="0 0 8 12"><path d="M1 0.5l6 3.5l-6 3.5M1 10.5h6" stroke="#000" stroke-width="1.3" fill="none"/></svg>
<svg style="left:481px;top:106px" width="10" height="12" viewBox="0 0 10 12"><path d="M0 4h10M0 8h10M8 1l-6 10" stroke="#000" stroke-width="1.3" fill="none"/></svg>
<svg style="left:504px;top:109px" width="9" height="6" viewBox="0 0 9 6"><path d="M0 1h8v5" stroke="#000" stroke-width="1.5" fill="none"/></svg>
<svg style="left:528px;top:106px" width="8" height="10" viewBox="0 0 8 10"><path d="M0.5 9.5l3.5-9l3.5 9" stroke="#000" stroke-width="1.1" fill="none"/></svg>
<svg style="left:551px;top:106px" width="8" height="10" viewBox="0 0 8 10"><path d="M0.5 0.5l3.5 9l3.5-9" stroke="#000" stroke-width="1.1" fill="none"/></svg>
<svg style="left:572px;top:104px" width="13" height="13" viewBox="0 0 13 13"><circle cx="6.5" cy="6.5" r="5.5" fill="none" stroke="#000" stroke-width="1.4"/><path d="M6.5 1v11M1 6.5h11" stroke="#000" stroke-width="1.4"/></svg>
<div class="a" style="left:0px;top:125px;width:800px;height:371px;background:#fff;"></div>
<div class="hl" style="left:0px;top:125px;width:800px;background:#808080"></div>
<div class="hl" style="left:1px;top:126px;width:798px;background:#404040"></div>
<div class="vl" style="left:0px;top:125px;height:370px;background:#808080"></div>
<div class="vl" style="left:1px;top:126px;height:368px;background:#404040"></div>
<div class="vl" style="left:798px;top:126px;height:368px;background:#D4D0C8"></div>
<div class="vl" style="left:799px;top:125px;height:371px;background:#fff"></div>
<div class="hl" style="left:1px;top:494px;width:798px;background:#D4D0C8"></div>
<div class="hl" style="left:0px;top:495px;width:800px;background:#fff"></div>
<div class="a chk" style="left:782px;top:127px;width:16px;height:350px"></div>
<div class="btn3d" style="left:782px;top:127px;width:16px;height:16px"><div class="in"></div><div class="tri" style="left:3px;top:5px;border-top:none;border-bottom:4px solid #000"></div></div>
<div class="btn3d" style="left:782px;top:143px;width:16px;height:16px"><div class="in"></div></div>
<div class="btn3d" style="left:782px;top:461px;width:16px;height:16px"><div class="in"></div><div class="tri" style="left:3px;top:5px"></div></div>
<div class="a chk" style="left:2px;top:477px;width:780px;height:16px"></div>
<div class="btn3d" style="left:2px;top:477px;width:16px;height:16px"><div class="in"></div><div class="tri" style="left:5px;top:3px;border-left:none;border-right:4px solid #000;border-top:4px solid transparent;border-bottom:4px solid transparent"></div></div>
<div class="btn3d" style="left:18px;top:477px;width:16px;height:16px"><div class="in"></div></div>
<div class="a" style="left:782px;top:477px;width:16px;height:17px;background:#D4D0C8;"></div>
<div class="t" style="left:13px;top:136px;font-family:'Liberation Serif',serif;font-size:15px;">x1</div>
<div class="a" style="left:35px;top:140px;width:2px;height:2px;background:#000;"></div>
<div class="a" style="left:35px;top:146px;width:2px;height:2px;background:#000;"></div>
<div class="a" style="left:38px;top:142px;width:8px;height:1px;background:#000;"></div>
<div class="a" style="left:38px;top:145px;width:8px;height:1px;background:#000;"></div>
<div class="t" style="left:53px;top:136px;font-family:'Liberation Serif',serif;font-size:15px;">0</div>
<div class="t" style="left:73px;top:136px;font-family:'Liberation Serif',serif;font-size:15px;">x2</div>
<div class="a" style="left:95px;top:140px;width:2px;height:2px;background:#000;"></div>
<div class="a" style="left:95px;top:146px;width:2px;height:2px;background:#000;"></div>
<div class="a" style="left:98px;top:142px;width:8px;height:1px;background:#000;"></div>
<div class="a" style="left:98px;top:145px;width:8px;height:1px;background:#000;"></div>
<div class="t" style="left:113px;top:136px;font-family:'Liberation Serif',serif;font-size:15px;">0</div>
<div class="t" style="left:133px;top:136px;font-family:'Liberation Serif',serif;font-size:15px;">x3</div>
<div class="a" style="left:155px;top:140px;width:2px;height:2px;background:#000;"></div>
<div class="a" style="left:155px;top:146px;width:2px;height:2px;background:#000;"></div>
<div class="a" style="left:158px;top:142px;width:8px;height:1px;background:#000;"></div>
<div class="a" style="left:158px;top:145px;width:8px;height:1px;background:#000;"></div>
<div class="t" style="left:173px;top:136px;font-family:'Liberation Serif',serif;font-size:15px;">0</div>
<div class="t" style="left:193px;top:136px;font-family:'Liberation Serif',serif;font-size:15px;">x4</div>
<div class="a" style="left:215px;top:140px;width:2px;height:2px;background:#000;"></div>
<div class="a" style="left:215px;top:146px;width:2px;height:2px;background:#000;"></div>
<div class="a" style="left:218px;top:142px;width:8px;height:1px;background:#000;"></div>
<div class="a" style="left:218px;top:145px;width:8px;height:1px;background:#000;"></div>
<div class="t" style="left:233px;top:136px;font-family:'Liberation Serif',serif;font-size:15px;">0</div>
<div class="t" style="left:14px;top:165px;font-family:'Liberation Serif',serif;font-size:15px;">Given</div>
<div class="t" style="left:14px;top:185px;font-family:'Liberation Serif',serif;font-size:15px;">2</div>
<div class="a" style="left:26px;top:194px;width:1px;height:1px;background:#000;"></div>
<div class="t" style="left:31px;top:185px;font-family:'Liberation Serif',serif;font-size:15px;">x1</div>
<div class="a" style="left:51px;top:193px;width:9px;height:1px;background:#000;"></div>
<div class="a" style="left:55px;top:189px;width:1px;height:9px;background:#000;"></div>
<div class="t" style="left:64px;top:185px;font-family:'Liberation Serif',serif;font-size:15px;">x2</div>
<div class="a" style="left:84px;top:193px;width:9px;height:1px;background:#000;"></div>
<div class="a" style="left:88px;top:189px;width:1px;height:9px;background:#000;"></div>
<div class="t" style="left:97px;top:185px;font-family:'Liberation Serif',serif;font-size:15px;">2x3</div>
<div class="a" style="left:125px;top:193px;width:9px;height:1px;background:#000;"></div>
<div class="a" style="left:129px;top:189px;width:1px;height:9px;background:#000;"></div>
<div class="t" style="left:139px;top:185px;font-family:'Liberation Serif',serif;font-size:15px;">3x4</div>
<div class="a" style="left:168px;top:191px;width:8px;height:2px;background:#000;"></div>
<div class="a" style="left:168px;top:195px;width:8px;height:2px;background:#000;"></div>
<div class="t" style="left:183px;top:185px;font-family:'Liberation Serif',serif;font-size:15px;">8</div>
<div class="t" style="left:14px;top:205px;font-family:'Liberation Serif',serif;font-size:15px;">3x1</div>
<div class="a" style="left:41px;top:213px;width:9px;height:1px;background:#000;"></div>
<div class="a" style="left:45px;top:209px;width:1px;height:9px;background:#000;"></div>
<div class="t" style="left:54px;top:205px;font-family:'Liberation Serif',serif;font-size:15px;">3</div>
<div class="a" style="left:67px;top:214px;width:1px;height:1px;background:#000;"></div>
<div class="t" style="left:72px;top:205px;font-family:'Liberation Serif',serif;font-size:15px;">x3</div>
<div class="a" style="left:94px;top:211px;width:8px;height:2px;background:#000;"></div>
<div class="a" style="left:94px;top:215px;width:8px;height:2px;background:#000;"></div>
<div class="t" style="left:108px;top:205px;font-family:'Liberation Serif',serif;font-size:15px;">6</div>
<div class="t" style="left:14px;top:225px;font-family:'Liberation Serif',serif;font-size:15px;">2</div>
<div class="a" style="left:26px;top:234px;width:1px;height:1px;background:#000;"></div>
<div class="t" style="left:31px;top:225px;font-family:'Liberation Serif',serif;font-size:15px;">x1</div>
<div class="a" style="left:51px;top:233px;width:9px;height:1px;background:#000;"></div>
<div class="t" style="left:63px;top:225px;font-family:'Liberation Serif',serif;font-size:15px;">x2</div>
<div class="a" style="left:83px;top:233px;width:9px;height:1px;background:#000;"></div>
<div class="a" style="left:87px;top:229px;width:1px;height:9px;background:#000;"></div>
<div class="t" style="left:96px;top:225px;font-family:'Liberation Serif',serif;font-size:15px;">3</div>
<div class="a" style="left:109px;top:234px;width:1px;height:1px;background:#000;"></div>
<div class="t" style="left:114px;top:225px;font-family:'Liberation Serif',serif;font-size:15px;">x4</div>
<div class="a" style="left:136px;top:231px;width:8px;height:2px;background:#000;"></div>
<div class="a" style="left:136px;top:235px;width:8px;height:2px;background:#000;"></div>
<div class="t" style="left:151px;top:225px;font-family:'Liberation Serif',serif;font-size:15px;">4</div>
<div class="t" style="left:13px;top:245px;font-family:'Liberation Serif',serif;font-size:15px;">x1</div>
<div class="a" style="left:33px;top:253px;width:9px;height:1px;background:#000;"></div>
<div class="a" style="left:37px;top:249px;width:1px;height:9px;background:#000;"></div>
<div class="t" style="left:47px;top:245px;font-family:'Liberation Serif',serif;font-size:15px;">2</div>
<div class="a" style="left:59px;top:254px;width:1px;height:1px;background:#000;"></div>
<div class="t" style="left:64px;top:245px;font-family:'Liberation Serif',serif;font-size:15px;">x2</div>
<div class="a" style="left:84px;top:253px;width:9px;height:1px;background:#000;"></div>
<div class="t" style="left:96px;top:245px;font-family:'Liberation Serif',serif;font-size:15px;">x3</div>
<div class="a" style="left:116px;top:253px;width:9px;height:1px;background:#000;"></div>
<div class="a" style="left:120px;top:249px;width:1px;height:9px;background:#000;"></div>
<div class="t" style="left:130px;top:245px;font-family:'Liberation Serif',serif;font-size:15px;">2</div>
<div class="a" style="left:142px;top:254px;width:1px;height:1px;background:#000;"></div>
<div class="t" style="left:147px;top:245px;font-family:'Liberation Serif',serif;font-size:15px;">x4</div>
<div class="a" style="left:169px;top:251px;width:8px;height:2px;background:#000;"></div>
<div class="a" style="left:169px;top:255px;width:8px;height:2px;background:#000;"></div>
<div class="t" style="left:184px;top:245px;font-family:'Liberation Serif',serif;font-size:15px;">4</div>
<div class="t" style="left:13px;top:326px;font-family:'Liberation Serif',serif;font-size:15px;">Find(</div>
<div class="t" style="left:46px;top:326px;font-family:'Liberation Serif',serif;font-size:15px;">x1</div>
<div class="t" style="left:70px;top:326px;font-family:'Liberation Serif',serif;font-size:15px;">x2</div>
<div class="t" style="left:93px;top:326px;font-family:'Liberation Serif',serif;font-size:15px;">x3</div>
<div class="t" style="left:116px;top:326px;font-family:'Liberation Serif',serif;font-size:15px;">x4</div>
<div class="t" style="left:132px;top:326px;font-family:'Liberation Serif',serif;font-size:15px;">)</div>
<svg style="left:66px;top:336px" width="2" height="5" viewBox="0 0 2 5" shape-rendering="crispEdges"><rect x="0" y="0" width="2" height="1" fill="#000"/><rect x="0" y="1" width="2" height="1" fill="#000"/><rect x="1" y="2" width="1" height="1" fill="#000"/><rect x="1" y="3" width="1" height="1" fill="#000"/><rect x="0" y="4" width="1" height="1" fill="#000"/></svg>
<svg style="left:89px;top:336px" width="2" height="5" viewBox="0 0 2 5" shape-rendering="crispEdges"><rect x="0" y="0" width="2" height="1" fill="#000"/><rect x="0" y="1" width="2" height="1" fill="#000"/><rect x="1" y="2" width="1" height="1" fill="#000"/><rect x="1" y="3" width="1" height="1" fill="#000"/><rect x="0" y="4" width="1" height="1" fill="#000"/></svg>
<svg style="left:112px;top:336px" width="2" height="5" viewBox="0 0 2 5" shape-rendering="crispEdges"><rect x="0" y="0" width="2" height="1" fill="#000"/><rect x="0" y="1" width="2" height="1" fill="#000"/><rect x="1" y="2" width="1" height="1" fill="#000"/><rect x="1" y="3" width="1" height="1" fill="#000"/><rect x="0" y="4" width="1" height="1" fill="#000"/></svg>
<div class="a" style="left:144px;top:331px;width:9px;height:1px;background:#000;"></div>
<div class="a" style="left:144px;top:334px;width:9px;height:1px;background:#000;"></div>
<svg style="left:155px;top:278px" width="40" height="110" viewBox="0 0 40 110"><path d="M12.5 3c-4 2-7.5 5-7.5 10v84c0 5 3.5 8 7.5 10" stroke="#000" stroke-width="1.1" fill="none"/><path d="M23.5 3c4 2 7.5 5 7.5 10v84c0 5-3.5 8-7.5 10" stroke="#000" stroke-width="1.1" fill="none"/></svg>
<div class="t" style="left:169px;top:284px;font-family:'Liberation Serif',serif;font-size:15px;">1</div>
<div class="t" style="left:169px;top:312px;font-family:'Liberation Serif',serif;font-size:15px;">1</div>
<div class="t" style="left:169px;top:339px;font-family:'Liberation Serif',serif;font-size:15px;">1</div>
<div class="t" style="left:169px;top:368px;font-family:'Liberation Serif',serif;font-size:15px;">1</div>
<div class="a" style="left:257px;top:287px;width:11px;height:1px;background:#ff0000;"></div>
<div class="a" style="left:262px;top:282px;width:1px;height:11px;background:#ff0000;"></div>
<div class="t" style="left:2px;top:501px;font-size:11px;letter-spacing:0.85px">Для помощи, нажмите F1</div>
<div class="hl" style="left:0px;top:541px;width:794px;background:#808080"></div>
<div class="hl" style="left:0px;top:542px;width:794px;background:#fff"></div>
<div class="hl" style="left:0px;top:570px;width:800px;background:#808080"></div>
<div class="hl" style="left:0px;top:571px;width:800px;background:#fff"></div>
<div class="vl" style="left:186px;top:514px;height:27px;background:#808080"></div>
<div class="vl" style="left:187px;top:514px;height:27px;background:#fff"></div>
<div class="grip" style="left:190px;top:516px;height:23px"></div>
<div class="vl" style="left:475px;top:514px;height:27px;background:#808080"></div>
<div class="vl" style="left:476px;top:514px;height:27px;background:#fff"></div>
<div class="grip" style="left:479px;top:516px;height:23px"></div>
<svg style="left:200px;top:520px" width="17" height="14" viewBox="0 0 17 14" shape-rendering="crispEdges"><path d="M2.5 0.5h-2v13h2M13.5 0.5h2v13h-2" stroke="#000" fill="none"/><rect x="3" y="2" width="2" height="2" fill="#000"/><rect x="7" y="2" width="2" height="2" fill="#000"/><rect x="11" y="2" width="2" height="2" fill="#000"/><rect x="3" y="6" width="2" height="2" fill="#000"/><rect x="7" y="6" width="2" height="2" fill="#000"/><rect x="11" y="6" width="2" height="2" fill="#000"/><rect x="3" y="10" width="2" height="2" fill="#000"/><rect x="7" y="10" width="2" height="2" fill="#000"/><rect x="11" y="10" width="2" height="2" fill="#000"/></svg>
<svg style="left:226px;top:522px" width="7" height="7" viewBox="0 0 7 7"><path d="M0.5 0.5l6 6M6.5 0.5l-6 6" stroke="#000" fill="none"/></svg>
<svg style="left:234px;top:529px" width="5" height="5" viewBox="0 0 5 5" shape-rendering="crispEdges"><rect x="0" y="0" width="1" height="1" fill="#000"/><rect x="2" y="0" width="2" height="1" fill="#000"/><rect x="0" y="1" width="2" height="1" fill="#000"/><rect x="4" y="1" width="1" height="1" fill="#000"/><rect x="0" y="2" width="1" height="1" fill="#000"/><rect x="4" y="2" width="1" height="1" fill="#000"/><rect x="0" y="3" width="1" height="1" fill="#000"/><rect x="4" y="3" width="1" height="1" fill="#000"/><rect x="0" y="4" width="1" height="1" fill="#000"/><rect x="4" y="4" width="1" height="1" fill="#000"/></svg>
<svg style="left:248px;top:525px" width="8" height="7" viewBox="0 0 8 7"><path d="M0.5 0.5l7 6M7.5 0.5l-7 6" stroke="#000" fill="none"/></svg>
<svg style="left:255px;top:521px" width="6" height="5" viewBox="0 0 6 5" shape-rendering="crispEdges"><rect x="4" y="0" width="2" height="1" fill="#000"/><rect x="3" y="1" width="3" height="1" fill="#000"/><rect x="0" y="2" width="3" height="1" fill="#000"/><rect x="5" y="2" width="1" height="1" fill="#000"/><rect x="5" y="3" width="1" height="1" fill="#000"/><rect x="5" y="4" width="1" height="1" fill="#000"/></svg>
<div class="a" style="left:271px;top:521px;width:1px;height:11px;background:#000;"></div>
<div class="a" style="left:281px;top:521px;width:1px;height:11px;background:#000;"></div>
<svg style="left:273px;top:525px" width="6" height="6" viewBox="0 0 6 6"><path d="M0.5 0.5l5 5M5.5 0.5l-5 5" stroke="#000" fill="none"/></svg>
<svg style="left:293px;top:519px" width="14" height="15" viewBox="0 0 14 15" shape-rendering="crispEdges"><rect x="11" y="0" width="2" height="1" fill="#000"/><rect x="13" y="1" width="1" height="1" fill="#000"/><rect x="0" y="2" width="14" height="1" fill="#000"/><rect x="13" y="3" width="1" height="1" fill="#000"/><rect x="11" y="4" width="2" height="1" fill="#000"/><rect x="1" y="6" width="2" height="1" fill="#000"/><rect x="5" y="6" width="1" height="1" fill="#000"/><rect x="12" y="6" width="1" height="1" fill="#000"/><rect x="0" y="7" width="1" height="1" fill="#000"/><rect x="4" y="7" width="1" height="1" fill="#000"/><rect x="6" y="7" width="2" height="1" fill="#000"/><rect x="10" y="7" width="2" height="1" fill="#000"/><rect x="13" y="7" width="1" height="1" fill="#000"/><rect x="0" y="8" width="3" height="1" fill="#000"/><rect x="4" y="8" width="1" height="1" fill="#000"/><rect x="6" y="8" width="2" height="1" fill="#000"/><rect x="10" y="8" width="2" height="1" fill="#000"/><rect x="13" y="8" width="1" height="1" fill="#000"/><rect x="0" y="9" width="1" height="1" fill="#000"/><rect x="4" y="9" width="1" height="1" fill="#000"/><rect x="6" y="9" width="1" height="1" fill="#000"/><rect x="8" y="9" width="2" height="1" fill="#000"/><rect x="11" y="9" width="1" height="1" fill="#000"/><rect x="13" y="9" width="1" height="1" fill="#000"/><rect x="0" y="10" width="1" height="1" fill="#000"/><rect x="4" y="10" width="1" height="1" fill="#000"/><rect x="6" y="10" width="1" height="1" fill="#000"/><rect x="8" y="10" width="2" height="1" fill="#000"/><rect x="11" y="10" width="1" height="1" fill="#000"/><rect x="13" y="10" width="1" height="1" fill="#000"/><rect x="0" y="11" width="1" height="1" fill="#000"/><rect x="4" y="11" width="1" height="1" fill="#000"/><rect x="6" y="11" width="1" height="1" fill="#000"/><rect x="11" y="11" width="1" height="1" fill="#000"/><rect x="13" y="11" width="1" height="1" fill="#000"/><rect x="0" y="12" width="1" height="1" fill="#000"/><rect x="4" y="12" width="1" height="1" fill="#000"/><rect x="6" y="12" width="1" height="1" fill="#000"/><rect x="11" y="12" width="1" height="1" fill="#000"/><rect x="13" y="12" width="1" height="1" fill="#000"/><rect x="0" y="13" width="1" height="1" fill="#000"/><rect x="4" y="13" width="1" height="1" fill="#000"/><rect x="6" y="13" width="1" height="1" fill="#000"/><rect x="11" y="13" width="1" height="1" fill="#000"/><rect x="13" y="13" width="1" height="1" fill="#000"/><rect x="5" y="14" width="1" height="1" fill="#000"/><rect x="12" y="14" width="1" height="1" fill="#000"/></svg>
<svg style="left:316px;top:518px" width="16" height="12" viewBox="0 0 16 12" shape-rendering="crispEdges"><rect x="10" y="0" width="1" height="1" fill="#000"/><rect x="13" y="0" width="1" height="1" fill="#000"/><rect x="9" y="1" width="1" height="1" fill="#000"/><rect x="14" y="1" width="1" height="1" fill="#000"/><rect x="8" y="2" width="1" height="1" fill="#000"/><rect x="15" y="2" width="1" height="1" fill="#000"/><rect x="9" y="3" width="1" height="1" fill="#000"/><rect x="14" y="3" width="1" height="1" fill="#000"/><rect x="0" y="4" width="2" height="1" fill="#000"/><rect x="6" y="4" width="2" height="1" fill="#000"/><rect x="10" y="4" width="1" height="1" fill="#000"/><rect x="13" y="4" width="1" height="1" fill="#000"/><rect x="0" y="5" width="2" height="1" fill="#000"/><rect x="6" y="5" width="2" height="1" fill="#000"/><rect x="0" y="6" width="1" height="1" fill="#000"/><rect x="2" y="6" width="1" height="1" fill="#000"/><rect x="5" y="6" width="1" height="1" fill="#000"/><rect x="7" y="6" width="1" height="1" fill="#000"/><rect x="0" y="7" width="1" height="1" fill="#000"/><rect x="2" y="7" width="1" height="1" fill="#000"/><rect x="5" y="7" width="1" height="1" fill="#000"/><rect x="7" y="7" width="1" height="1" fill="#000"/><rect x="0" y="8" width="1" height="1" fill="#000"/><rect x="3" y="8" width="2" height="1" fill="#000"/><rect x="7" y="8" width="1" height="1" fill="#000"/><rect x="0" y="9" width="1" height="1" fill="#000"/><rect x="7" y="9" width="1" height="1" fill="#000"/><rect x="0" y="10" width="1" height="1" fill="#000"/><rect x="7" y="10" width="1" height="1" fill="#000"/><rect x="0" y="11" width="1" height="1" fill="#000"/><rect x="7" y="11" width="1" height="1" fill="#000"/></svg>
<svg style="left:341px;top:521px" width="13" height="11" viewBox="0 0 13 11" shape-rendering="crispEdges"><rect x="8" y="0" width="5" height="1" fill="#000"/><rect x="10" y="1" width="1" height="1" fill="#000"/><rect x="10" y="2" width="1" height="1" fill="#000"/><rect x="0" y="3" width="1" height="1" fill="#000"/><rect x="5" y="3" width="1" height="1" fill="#000"/><rect x="10" y="3" width="1" height="1" fill="#000"/><rect x="0" y="4" width="2" height="1" fill="#000"/><rect x="4" y="4" width="2" height="1" fill="#000"/><rect x="0" y="5" width="1" height="1" fill="#000"/><rect x="2" y="5" width="2" height="1" fill="#000"/><rect x="5" y="5" width="1" height="1" fill="#000"/><rect x="0" y="6" width="1" height="1" fill="#000"/><rect x="5" y="6" width="1" height="1" fill="#000"/><rect x="0" y="7" width="1" height="1" fill="#000"/><rect x="5" y="7" width="1" height="1" fill="#000"/><rect x="0" y="8" width="1" height="1" fill="#000"/><rect x="5" y="8" width="1" height="1" fill="#000"/><rect x="0" y="9" width="1" height="1" fill="#000"/><rect x="5" y="9" width="1" height="1" fill="#000"/><rect x="0" y="10" width="1" height="1" fill="#000"/><rect x="5" y="10" width="1" height="1" fill="#000"/></svg>
<svg style="left:361px;top:525px" width="16" height="6" viewBox="0 0 16 6" shape-rendering="crispEdges"><rect x="0" y="0" width="3" height="1" fill="#000"/><rect x="4" y="0" width="2" height="1" fill="#000"/><rect x="13" y="0" width="3" height="1" fill="#000"/><rect x="0" y="1" width="2" height="1" fill="#000"/><rect x="3" y="1" width="1" height="1" fill="#000"/><rect x="5" y="1" width="1" height="1" fill="#000"/><rect x="13" y="1" width="1" height="1" fill="#000"/><rect x="15" y="1" width="1" height="1" fill="#000"/><rect x="0" y="2" width="1" height="1" fill="#000"/><rect x="3" y="2" width="1" height="1" fill="#000"/><rect x="5" y="2" width="1" height="1" fill="#000"/><rect x="13" y="2" width="1" height="1" fill="#000"/><rect x="15" y="2" width="1" height="1" fill="#000"/><rect x="0" y="3" width="1" height="1" fill="#000"/><rect x="3" y="3" width="1" height="1" fill="#000"/><rect x="5" y="3" width="1" height="1" fill="#000"/><rect x="13" y="3" width="1" height="1" fill="#000"/><rect x="15" y="3" width="1" height="1" fill="#000"/><rect x="0" y="4" width="1" height="1" fill="#000"/><rect x="3" y="4" width="1" height="1" fill="#000"/><rect x="5" y="4" width="1" height="1" fill="#000"/><rect x="7" y="4" width="2" height="1" fill="#000"/><rect x="10" y="4" width="2" height="1" fill="#000"/><rect x="13" y="4" width="1" height="1" fill="#000"/><rect x="15" y="4" width="1" height="1" fill="#000"/><rect x="0" y="5" width="1" height="1" fill="#000"/><rect x="3" y="5" width="1" height="1" fill="#000"/><rect x="5" y="5" width="1" height="1" fill="#000"/><rect x="7" y="5" width="2" height="1" fill="#000"/><rect x="10" y="5" width="2" height="1" fill="#000"/><rect x="13" y="5" width="1" height="1" fill="#000"/><rect x="15" y="5" width="1" height="1" fill="#000"/></svg>
<svg style="left:384px;top:522px" width="5" height="8" viewBox="0 0 5 8" shape-rendering="crispEdges"><rect x="2" y="0" width="1" height="1" fill="#000"/><rect x="1" y="1" width="3" height="1" fill="#000"/><rect x="0" y="3" width="1" height="1" fill="#000"/><rect x="4" y="3" width="1" height="1" fill="#000"/><rect x="1" y="4" width="1" height="1" fill="#000"/><rect x="3" y="4" width="1" height="1" fill="#000"/><rect x="2" y="5" width="1" height="1" fill="#000"/><rect x="1" y="6" width="1" height="1" fill="#000"/><rect x="3" y="6" width="1" height="1" fill="#000"/><rect x="0" y="7" width="1" height="1" fill="#000"/><rect x="4" y="7" width="1" height="1" fill="#000"/></svg>
<svg style="left:391px;top:526px" width="2" height="2" viewBox="0 0 2 2" shape-rendering="crispEdges"><rect x="0" y="0" width="2" height="1" fill="#000"/><rect x="0" y="1" width="2" height="1" fill="#000"/></svg>
<svg style="left:395px;top:522px" width="5" height="8" viewBox="0 0 5 8" shape-rendering="crispEdges"><rect x="2" y="0" width="1" height="1" fill="#000"/><rect x="1" y="1" width="3" height="1" fill="#000"/><rect x="0" y="3" width="1" height="1" fill="#000"/><rect x="4" y="3" width="1" height="1" fill="#000"/><rect x="0" y="4" width="1" height="1" fill="#000"/><rect x="4" y="4" width="1" height="1" fill="#000"/><rect x="1" y="5" width="1" height="1" fill="#000"/><rect x="3" y="5" width="1" height="1" fill="#000"/><rect x="2" y="6" width="1" height="1" fill="#000"/><rect x="2" y="7" width="1" height="1" fill="#000"/></svg>
<svg style="left:407px;top:522px" width="5" height="8" viewBox="0 0 5 8" shape-rendering="crispEdges"><rect x="2" y="0" width="1" height="1" fill="#000"/><rect x="1" y="1" width="3" height="1" fill="#000"/><rect x="0" y="3" width="1" height="1" fill="#000"/><rect x="4" y="3" width="1" height="1" fill="#000"/><rect x="1" y="4" width="1" height="1" fill="#000"/><rect x="3" y="4" width="1" height="1" fill="#000"/><rect x="2" y="5" width="1" height="1" fill="#000"/><rect x="1" y="6" width="1" height="1" fill="#000"/><rect x="3" y="6" width="1" height="1" fill="#000"/><rect x="0" y="7" width="1" height="1" fill="#000"/><rect x="4" y="7" width="1" height="1" fill="#000"/></svg>
<svg style="left:411px;top:525px" width="6" height="6" viewBox="0 0 6 6"><path d="M0.5 0.5l5 5M5.5 0.5l-5 5" stroke="#000" fill="none"/></svg>
<svg style="left:418px;top:522px" width="5" height="8" viewBox="0 0 5 8" shape-rendering="crispEdges"><rect x="2" y="0" width="1" height="1" fill="#000"/><rect x="1" y="1" width="3" height="1" fill="#000"/><rect x="0" y="3" width="1" height="1" fill="#000"/><rect x="4" y="3" width="1" height="1" fill="#000"/><rect x="0" y="4" width="1" height="1" fill="#000"/><rect x="4" y="4" width="1" height="1" fill="#000"/><rect x="1" y="5" width="1" height="1" fill="#000"/><rect x="3" y="5" width="1" height="1" fill="#000"/><rect x="2" y="6" width="1" height="1" fill="#000"/><rect x="2" y="7" width="1" height="1" fill="#000"/></svg>
<svg style="left:432px;top:522px" width="7" height="8" viewBox="0 0 7 8" shape-rendering="crispEdges"><rect x="0" y="0" width="7" height="1" fill="#000"/><rect x="0" y="1" width="3" height="1" fill="#000"/><rect x="6" y="1" width="1" height="1" fill="#000"/><rect x="1" y="2" width="3" height="1" fill="#000"/><rect x="2" y="3" width="3" height="1" fill="#000"/><rect x="2" y="4" width="3" height="1" fill="#000"/><rect x="1" y="5" width="3" height="1" fill="#000"/><rect x="0" y="6" width="3" height="1" fill="#000"/><rect x="6" y="6" width="1" height="1" fill="#000"/><rect x="0" y="7" width="7" height="1" fill="#000"/></svg>
<svg style="left:439px;top:525px" width="5" height="6" viewBox="0 0 5 6" shape-rendering="crispEdges"><rect x="0" y="0" width="1" height="1" fill="#000"/><rect x="4" y="0" width="1" height="1" fill="#000"/><rect x="0" y="1" width="1" height="1" fill="#000"/><rect x="4" y="1" width="1" height="1" fill="#000"/><rect x="0" y="2" width="1" height="1" fill="#000"/><rect x="4" y="2" width="1" height="1" fill="#000"/><rect x="1" y="3" width="1" height="1" fill="#000"/><rect x="3" y="3" width="1" height="1" fill="#000"/><rect x="1" y="4" width="1" height="1" fill="#000"/><rect x="3" y="4" width="1" height="1" fill="#000"/><rect x="2" y="5" width="1" height="1" fill="#000"/></svg>
<svg style="left:453px;top:519px" width="17" height="16" viewBox="0 0 17 16"><rect x="1" y="1" width="15" height="14" fill="#fff" stroke="#000" stroke-width="2"/><path d="M4.5 5v5M6.5 3v9M8.5 6v3M10 9.5h5M11 12.5h4M5 7h4" stroke="#000" stroke-width="1" fill="none"/><circle cx="12.5" cy="5" r="1.8" fill="none" stroke="#000"/><path d="M2 14l4-4v4z" fill="#000"/></svg>
<svg style="left:489px;top:519px" width="16" height="16" viewBox="0 0 16 16"><path d="M0.5 0v15.5h15" stroke="#000" fill="none"/><path d="M1 13l4-8l3 2l4-4l3 2" stroke="#0000ff" fill="none"/><path d="M1 6l14 6" stroke="#ff0000" fill="none"/></svg>
<svg style="left:512px;top:519px" width="16" height="16" viewBox="0 0 16 16"><circle cx="7" cy="7" r="5" fill="none" stroke="#808080" stroke-width="1.5"/><path d="M7 0v14M0 7h14M10 10l5 5" stroke="#808080" stroke-width="1.5"/><path d="M8 15h6" stroke="#fff"/></svg>
<svg style="left:535px;top:518px" width="16" height="17" viewBox="0 0 16 17"><path d="M14 2l-8 8" stroke="#808080" stroke-width="2.5"/><path d="M1 6v8h8M3 9l4 4M1 14l5-4" stroke="#808080" stroke-width="1.3" fill="none"/><path d="M2 16h10" stroke="#fff"/></svg>
<svg style="left:558px;top:519px" width="16" height="16" viewBox="0 0 16 16"><circle cx="8" cy="8" r="7" fill="none" stroke="#000" stroke-width="1.3"/><path d="M8 2v13M2 8h13" stroke="#008000"/><path d="M9 4a3 3 0 1 0 0 8a3 3 0 0 1 0-8" stroke="#ff0000" fill="none"/></svg>
<svg style="left:581px;top:522px" width="8" height="12" viewBox="0 0 8 12"><path d="M0 11l4-9l3 9z" fill="#00e0e0" stroke="#000"/><path d="M3 3l3 5" stroke="#00ff00" stroke-width="2"/></svg>
<div class="grip" style="left:2px;top:545px;height:23px"></div>
<div class="vl" style="left:218px;top:543px;height:27px;background:#808080"></div>
<div class="vl" style="left:219px;top:543px;height:27px;background:#fff"></div>
<svg style="left:16px;top:553px" width="9" height="5" viewBox="0 0 9 5" shape-rendering="crispEdges"><rect x="0" y="0" width="9" height="2" fill="#000"/><rect x="0" y="3" width="9" height="2" fill="#000"/></svg>
<svg style="left:38px;top:553px" width="11" height="6" viewBox="0 0 11 6" shape-rendering="crispEdges"><rect x="0" y="0" width="2" height="2" fill="#000"/><rect x="0" y="4" width="2" height="2" fill="#000"/><rect x="3" y="0" width="8" height="2" fill="#000"/><rect x="3" y="3" width="8" height="2" fill="#000"/></svg>
<svg style="left:62px;top:553px" width="9" height="6" viewBox="0 0 9 6" shape-rendering="crispEdges"><rect x="0" y="0" width="9" height="1" fill="#000"/><rect x="0" y="2" width="9" height="2" fill="#000"/><rect x="0" y="5" width="9" height="1" fill="#000"/></svg>
<svg style="left:84px;top:553px" width="11" height="7" viewBox="0 0 11 7"><path d="M0 3.5h10M7 0.5l3 3l-3 3" stroke="#000" fill="none" stroke-width="1.2"/></svg>
<div class="a" style="left:105px;top:555px;width:3px;height:3px;background:#000;"></div>
<svg style="left:108px;top:553px" width="11" height="7" viewBox="0 0 11 7"><path d="M0 3.5h10M7 0.5l3 3l-3 3" stroke="#000" fill="none" stroke-width="1.2"/></svg>
<div class="t" style="left:128px;top:550px;font-family:'Liberation Serif',serif;font-size:14px">f</div>
<div class="t" style="left:135px;top:550px;font-family:'Liberation Serif',serif;font-size:14px">x</div>
<div class="t" style="left:150px;top:550px;font-family:'Liberation Serif',serif;font-size:14px">x</div>
<div class="t" style="left:158px;top:550px;font-family:'Liberation Serif',serif;font-size:14px">f</div>
<div class="t" style="left:173px;top:549px;font-family:'Liberation Serif',serif;font-size:14px;letter-spacing:-0.6px">xfy</div>
<div class="t" style="left:195px;top:551px;font-family:'Liberation Serif',serif;font-size:14px">x</div>
<div class="t" style="left:201px;top:546px;font-family:'Liberation Serif',serif;font-size:13px">f</div>
<div class="t" style="left:205px;top:550px;font-family:'Liberation Serif',serif;font-size:14px">y</div>
<div class="a" style="left:0px;top:572px;width:800px;height:28px;background:#D4D0C8;"></div>
<div class="hl" style="left:0px;top:573px;width:800px;background:#fff"></div>
<div class="btn3d" style="left:2px;top:576px;width:55px;height:22px"><div class="in"></div></div>
<svg style="left:6px;top:579px" width="17" height="16" viewBox="0 0 17 16"><rect x="0" y="0" width="17" height="16" rx="3" fill="#000"/><path d="M3 5c2-1 3-1 5 0v4c-2-1-3-1-5 0z" fill="#c0c0c0"/><path d="M9 5c2 1 3 1 5 0v4c-2 1-3 1-5 0z" fill="#e0e0e0"/><path d="M3 10c2-1 3-1 5 0v4c-2-1-3-1-5 0z" fill="#a0a0a0"/><path d="M9 10c2 1 3 1 5 0v4c-2 1-3 1-5 0z" fill="#d0d0d0"/></svg>
<div class="t" style="left:24px;top:582px;font-size:12px;font-weight:bold;letter-spacing:0.3px">Пуск</div>
<div class="vl" style="left:59px;top:575px;height:24px;background:#808080"></div>
<div class="vl" style="left:60px;top:575px;height:24px;background:#fff"></div>
<div class="grip" style="left:63px;top:578px;height:18px"></div>
<svg style="left:73px;top:578px" width="16" height="17" viewBox="0 0 16 17"><defs><linearGradient id="ql1" x1="0" y1="0" x2="1" y2="1"><stop offset="0" stop-color="#4040a0"/><stop offset="0.5" stop-color="#8080d0"/><stop offset="1" stop-color="#40a0a0"/></linearGradient></defs><rect x="0.5" y="3.5" width="13" height="13" fill="url(#ql1)" stroke="#404080"/><path d="M3 6c2 3 4 5 6 6M5 12l7-9" stroke="#d0d0ff" stroke-width="1.5" fill="none"/><path d="M11 1l4 2l-3 3z" fill="#202060"/><rect x="1" y="4" width="3" height="5" fill="#e0a040"/></svg>
<svg style="left:96px;top:580px" width="16" height="14" viewBox="0 0 16 14"><rect x="0.5" y="0.5" width="15" height="13" rx="2" fill="#008080" stroke="#000"/><rect x="3" y="3" width="10" height="2" fill="#e0ffff"/><path d="M3 7h2M6 7h2M9 7h2M12 7h1M3 9h2M6 9h2M9 9h2M12 9h1" stroke="#fff"/></svg>
<svg style="left:118px;top:578px" width="16" height="16" viewBox="0 0 16 16"><path d="M0.5 0.5h13l2 2v13h-15z" fill="#2040e0" stroke="#000080"/><rect x="4" y="1" width="7" height="5" fill="#d0d0d0"/><rect x="8" y="2" width="2" height="3" fill="#2040e0"/><rect x="2" y="8" width="12" height="7" fill="#fff"/><path d="M3 10h10M3 12h10" stroke="#e04040" stroke-width="1.2"/></svg>
<svg style="left:142px;top:578px" width="16" height="17" viewBox="0 0 16 17"><rect x="0.5" y="0.5" width="15" height="14" fill="#0000c0" stroke="#00e0e0"/><path d="M8 1v13" stroke="#00e0e0"/><path d="M3 4h3M10 4h3M3 7h3M10 7h3" stroke="#ffff00"/><path d="M0 16h16" stroke="#000" stroke-dasharray="1 1"/></svg>
<svg style="left:168px;top:581px" width="6" height="5" viewBox="0 0 6 5" shape-rendering="crispEdges"><rect x="0" y="0" width="1" height="1" fill="#000"/><rect x="3" y="0" width="1" height="1" fill="#000"/><rect x="1" y="1" width="1" height="1" fill="#000"/><rect x="4" y="1" width="1" height="1" fill="#000"/><rect x="2" y="2" width="1" height="1" fill="#000"/><rect x="5" y="2" width="1" height="1" fill="#000"/><rect x="1" y="3" width="1" height="1" fill="#000"/><rect x="4" y="3" width="1" height="1" fill="#000"/><rect x="0" y="4" width="1" height="1" fill="#000"/><rect x="3" y="4" width="1" height="1" fill="#000"/></svg>
<div class="vl" style="left:178px;top:575px;height:24px;background:#808080"></div>
<div class="vl" style="left:179px;top:575px;height:24px;background:#fff"></div>
<div class="grip" style="left:182px;top:578px;height:18px"></div>
<div class="btn3d" style="left:188px;top:576px;width:161px;height:22px"><div class="in"></div></div>
<svg style="left:193px;top:579px" width="17" height="14" viewBox="0 0 17 14"><path d="M1.5 2.5l1-2h4l1 2h8v10h-14z" fill="#ffffc0" stroke="#a0a000"/><path d="M1.5 12.5l2-6h12l-1 6z" fill="#f0e0a0" stroke="#808000"/><path d="M15 3v10h-13" stroke="#000" fill="none"/></svg>
<div class="t" style="left:211px;top:582px;font-size:12px;letter-spacing:0.35px">Акользина</div>
<div class="pressed chk" style="left:352px;top:576px;width:160px;height:22px;border-top-color:#404040;border-left-color:#404040"></div>
<div class="hl" style="left:353px;top:577px;width:158px;background:#808080"></div>
<div class="vl" style="left:353px;top:577px;height:20px;background:#808080"></div>
<svg style="left:356px;top:580px" width="16" height="16" viewBox="0 0 16 16"><path d="M2.98 10.00A5.8 5 0 0 1 2.55 5.79" stroke="#d03838" stroke-width="3.2" fill="none"/><path d="M2.55 5.79A5.8 5 0 0 1 5.55 2.97" stroke="#50a040" stroke-width="3.2" fill="none"/><path d="M5.55 2.97A5.8 5 0 0 1 9.98 2.80" stroke="#90b030" stroke-width="3.2" fill="none"/><path d="M9.98 2.80A5.8 5 0 0 1 13.45 5.79" stroke="#e08828" stroke-width="3.2" fill="none"/><path d="M13.45 5.79A5.8 5 0 0 1 13.02 10.00" stroke="#e8b020" stroke-width="3.2" fill="none"/><path d="M13.02 10.00A5.8 5 0 0 1 8.00 12.50" stroke="#e0d020" stroke-width="3.2" fill="none"/><path d="M8.00 12.50A5.8 5 0 0 1 2.98 10.00" stroke="#e0a020" stroke-width="3.2" fill="none"/><path d="M8.5 9.5h7v6h-7z" fill="#000"/><path d="M9.5 15v-4.5l1.5 2l1.5-2v4.5M14 10.5v4.5" stroke="#a0a0a0" fill="none" stroke-width="0.9"/></svg>
<div class="t" style="left:373px;top:582px;font-size:12px;font-weight:bold;letter-spacing:0.3px">Mathcad Професси...</div>
<div class="btn3d" style="left:516px;top:576px;width:159px;height:22px"><div class="in"></div></div>
<svg style="left:520px;top:579px" width="17" height="17" viewBox="0 0 17 17"><path d="M4.5 0.5h8l4 4v12h-12z" fill="#fff" stroke="#000"/><rect x="0.5" y="3.5" width="10" height="9" fill="#2040c0" stroke="#000080"/><path d="M2 5l1.5 6l2-4l2 4l1.5-6" stroke="#fff" fill="none"/></svg>
<div class="t" style="left:537px;top:582px;font-size:12px;letter-spacing:0.3px">Лена - Microsoft Word</div>
<div class="vl" style="left:700px;top:575px;height:24px;background:#808080"></div>
<div class="vl" style="left:701px;top:575px;height:24px;background:#fff"></div>
<div class="a" style="left:703px;top:576px;width:95px;height:21px;border-top:1px solid #808080;border-left:1px solid #808080;border-right:1px solid #fff;border-bottom:1px solid #fff"></div>
<svg style="left:706px;top:579px" width="15" height="16" viewBox="0 0 15 16"><rect x="1" y="1" width="10" height="9" fill="#0000ff" stroke="#000"/><rect x="2" y="2" width="4" height="4" fill="#00ffff"/><rect x="9" y="2" width="5" height="12" fill="#e00000"/><path d="M2 14l10-9" stroke="#ffff00" stroke-width="2"/><circle cx="11" cy="1.5" r="1.5" fill="#00e000"/></svg>
<div class="a" style="left:723px;top:578px;width:16px;height:17px;background:#808080;"></div>
<div class="t" style="left:724px;top:582px;font-size:12px;color:#fff;letter-spacing:0.3px">En</div>
<div class="t" style="left:753px;top:582px;font-size:12px;letter-spacing:0.5px">13:33</div>
<div class="a" style="left:632px;top:170px;width:127px;height:391px;background:#D4D0C8;"></div>
<div class="hl" style="left:633px;top:171px;width:125px;background:#fff"></div>
<div class="vl" style="left:633px;top:171px;height:389px;background:#fff"></div>
<div class="hl" style="left:632px;top:560px;width:127px;background:#404040"></div>
<div class="vl" style="left:758px;top:170px;height:391px;background:#404040"></div>
<div class="hl" style="left:633px;top:559px;width:125px;background:#808080"></div>
<div class="vl" style="left:757px;top:171px;height:389px;background:#808080"></div>
<div class="ptitle" style="left:636px;top:174px;width:119px;height:16px"></div>
<div class="t" style="left:637px;top:177px;color:#fff;font-weight:bold;font-size:12px;letter-spacing:0.6px">Калькулятор</div>
<div class="btn3d" style="left:740px;top:176px;width:13px;height:12px"><div class="in"></div><svg style="left:-1px;top:-1px" width="13" height="12" viewBox="0 0 13 12" shape-rendering="crispEdges"><rect x="2" y="3" width="2" height="1" fill="#000"/><rect x="7" y="3" width="2" height="1" fill="#000"/><rect x="3" y="4" width="2" height="1" fill="#000"/><rect x="6" y="4" width="2" height="1" fill="#000"/><rect x="4" y="5" width="3" height="1" fill="#000"/><rect x="3" y="6" width="2" height="1" fill="#000"/><rect x="6" y="6" width="2" height="1" fill="#000"/><rect x="2" y="7" width="2" height="1" fill="#000"/><rect x="7" y="7" width="2" height="1" fill="#000"/></svg></div>
<div class="t" style="left:629px;top:197px;font-size:13px;text-align:center;width:40px;">sin</div>
<div class="t" style="left:652px;top:197px;font-size:13px;text-align:center;width:40px;">cos</div>
<div class="t" style="left:675px;top:197px;font-size:13px;text-align:center;width:40px;">tan</div>
<div class="t" style="left:698px;top:197px;font-size:13px;text-align:center;width:40px;">ln</div>
<div class="t" style="left:721px;top:197px;font-size:13px;text-align:center;width:40px;">log</div>
<div class="t" style="left:629px;top:220px;font-size:13px;text-align:center;width:40px;">n!</div>
<div class="t" style="left:652px;top:220px;font-size:13px;text-align:center;width:40px;">i</div>
<div class="t" style="left:675px;top:220px;font-size:13px;text-align:center;width:40px;font-size:12px">|×|</div>
<svg style="left:712px;top:222px" width="12" height="11" viewBox="0 0 12 11" shape-rendering="crispEdges"><rect x="2" y="0" width="10" height="1" fill="#000"/><rect x="2" y="1" width="2" height="1" fill="#000"/><rect x="10" y="1" width="2" height="1" fill="#000"/><rect x="2" y="2" width="1" height="1" fill="#000"/><rect x="11" y="2" width="1" height="1" fill="#000"/><rect x="2" y="3" width="1" height="1" fill="#000"/><rect x="2" y="4" width="1" height="1" fill="#000"/><rect x="2" y="5" width="1" height="1" fill="#000"/><rect x="2" y="6" width="1" height="1" fill="#000"/><rect x="0" y="7" width="1" height="1" fill="#000"/><rect x="2" y="7" width="1" height="1" fill="#000"/><rect x="1" y="8" width="2" height="1" fill="#000"/><rect x="2" y="9" width="1" height="1" fill="#000"/><rect x="2" y="10" width="1" height="1" fill="#000"/></svg>
<svg style="left:738px;top:222px" width="12" height="11" viewBox="0 0 12 11" shape-rendering="crispEdges"><rect x="2" y="0" width="10" height="1" fill="#000"/><rect x="2" y="1" width="2" height="1" fill="#000"/><rect x="10" y="1" width="2" height="1" fill="#000"/><rect x="2" y="2" width="1" height="1" fill="#000"/><rect x="11" y="2" width="1" height="1" fill="#000"/><rect x="2" y="3" width="1" height="1" fill="#000"/><rect x="2" y="4" width="1" height="1" fill="#000"/><rect x="2" y="5" width="1" height="1" fill="#000"/><rect x="2" y="6" width="1" height="1" fill="#000"/><rect x="0" y="7" width="1" height="1" fill="#000"/><rect x="2" y="7" width="1" height="1" fill="#000"/><rect x="1" y="8" width="2" height="1" fill="#000"/><rect x="2" y="9" width="1" height="1" fill="#000"/><rect x="2" y="10" width="1" height="1" fill="#000"/></svg>
<svg style="left:734px;top:220px" width="4" height="5" viewBox="0 0 4 5" shape-rendering="crispEdges"><rect x="0" y="0" width="1" height="1" fill="#000"/><rect x="2" y="0" width="1" height="1" fill="#000"/><rect x="0" y="1" width="2" height="1" fill="#000"/><rect x="3" y="1" width="1" height="1" fill="#000"/><rect x="0" y="2" width="1" height="1" fill="#000"/><rect x="3" y="2" width="1" height="1" fill="#000"/><rect x="0" y="3" width="1" height="1" fill="#000"/><rect x="3" y="3" width="1" height="1" fill="#000"/><rect x="0" y="4" width="1" height="1" fill="#000"/><rect x="3" y="4" width="1" height="1" fill="#000"/></svg>
<div class="t" style="left:643px;top:244px;font-size:13px">e</div>
<div class="t" style="left:650px;top:242px;font-size:8px;font-weight:bold">x</div>
<div class="t" style="left:670px;top:241px;font-size:8px;font-weight:bold">1</div>
<div class="a" style="left:667px;top:249px;width:10px;height:1px;background:#000;"></div>
<svg style="left:669px;top:251px" width="7" height="6" viewBox="0 0 7 6"><path d="M0.5 0.5l6 5M6.5 0.5l-6 5" stroke="#000" fill="none"/></svg>
<div class="t" style="left:688px;top:243px;font-size:14px;transform:scaleX(0.8)">(</div>
<div class="t" style="left:697px;top:243px;font-size:14px;transform:scaleX(0.8)">)</div>
<svg style="left:712px;top:247px" width="8" height="8" viewBox="0 0 8 8"><path d="M0.5 0.5l7 7M7.5 0.5l-7 7" stroke="#000" fill="none" stroke-width="1"/></svg>
<div class="t" style="left:721px;top:241px;font-size:9px;font-weight:bold">2</div>
<svg style="left:736px;top:247px" width="8" height="8" viewBox="0 0 8 8"><path d="M0.5 0.5l7 7M7.5 0.5l-7 7" stroke="#000" fill="none" stroke-width="1"/></svg>
<div class="t" style="left:743px;top:241px;font-size:8px;font-weight:bold">Y</div>
<div class="t" style="left:643px;top:266px;font-size:13px">π</div>
<div class="t" style="left:652px;top:266px;font-size:13px;text-align:center;width:40px;">7</div>
<div class="t" style="left:675px;top:266px;font-size:13px;text-align:center;width:40px;">8</div>
<div class="t" style="left:698px;top:266px;font-size:13px;text-align:center;width:40px;">9</div>
<svg style="left:737px;top:268px" width="8" height="11" viewBox="0 0 8 11"><path d="M7 0.5l-6 10" stroke="#000" stroke-width="1.1" fill="none"/></svg>
<svg style="left:643px;top:289px" width="12" height="13" viewBox="0 0 12 13" shape-rendering="crispEdges"><rect x="0" y="4" width="2" height="5" fill="#000"/><rect x="5" y="0" width="2" height="4" fill="#000"/><rect x="3" y="6" width="6" height="1" fill="#000"/><rect x="5" y="9" width="2" height="4" fill="#000"/></svg>
<div class="t" style="left:652px;top:289px;font-size:13px;text-align:center;width:40px;">4</div>
<div class="t" style="left:675px;top:289px;font-size:13px;text-align:center;width:40px;">5</div>
<div class="t" style="left:698px;top:289px;font-size:13px;text-align:center;width:40px;">6</div>
<svg style="left:736px;top:293px" width="9" height="9" viewBox="0 0 9 9"><path d="M0.5 0.5l8 8M8.5 0.5l-8 8" stroke="#000" fill="none"/></svg>
<svg style="left:643px;top:315px" width="9" height="7" viewBox="0 0 9 7" shape-rendering="crispEdges"><rect x="4" y="0" width="1" height="1" fill="#000"/><rect x="0" y="3" width="9" height="1" fill="#000"/><rect x="4" y="6" width="1" height="1" fill="#000"/></svg>
<div class="t" style="left:652px;top:312px;font-size:13px;text-align:center;width:40px;">1</div>
<div class="t" style="left:675px;top:312px;font-size:13px;text-align:center;width:40px;">2</div>
<div class="t" style="left:698px;top:312px;font-size:13px;text-align:center;width:40px;">3</div>
<svg style="left:736px;top:314px" width="9" height="9" viewBox="0 0 9 9" shape-rendering="crispEdges"><rect x="4" y="0" width="1" height="1" fill="#000"/><rect x="4" y="1" width="1" height="1" fill="#000"/><rect x="4" y="2" width="1" height="1" fill="#000"/><rect x="4" y="3" width="1" height="1" fill="#000"/><rect x="0" y="4" width="9" height="1" fill="#000"/><rect x="4" y="5" width="1" height="1" fill="#000"/><rect x="4" y="6" width="1" height="1" fill="#000"/><rect x="4" y="7" width="1" height="1" fill="#000"/><rect x="4" y="8" width="1" height="1" fill="#000"/></svg>
<svg style="left:643px;top:339px" width="10" height="8" viewBox="0 0 10 8" shape-rendering="crispEdges"><rect x="0" y="1" width="2" height="2" fill="#000"/><rect x="0" y="5" width="2" height="2" fill="#000"/><rect x="3" y="2" width="7" height="1" fill="#000"/><rect x="3" y="5" width="7" height="1" fill="#000"/></svg>
<div class="a" style="left:671px;top:343px;width:2px;height:2px;background:#000;"></div>
<div class="t" style="left:675px;top:335px;font-size:13px;text-align:center;width:40px;">0</div>
<div class="a" style="left:713px;top:341px;width:9px;height:1px;background:#000;"></div>
<div class="a" style="left:736px;top:339px;width:9px;height:1px;background:#000;"></div>
<div class="a" style="left:736px;top:343px;width:9px;height:1px;background:#000;"></div>
<div class="a" style="left:587px;top:348px;width:207px;height:213px;background:#D4D0C8;"></div>
<div class="hl" style="left:588px;top:349px;width:205px;background:#fff"></div>
<div class="vl" style="left:588px;top:349px;height:211px;background:#fff"></div>
<div class="hl" style="left:587px;top:560px;width:207px;background:#404040"></div>
<div class="vl" style="left:793px;top:348px;height:213px;background:#404040"></div>
<div class="hl" style="left:588px;top:559px;width:205px;background:#808080"></div>
<div class="vl" style="left:792px;top:349px;height:211px;background:#808080"></div>
<div class="ptitle" style="left:591px;top:352px;width:199px;height:16px"></div>
<div class="t" style="left:592px;top:355px;color:#fff;font-weight:bold;font-size:12px;letter-spacing:0.1px">Символика</div>
<div class="btn3d" style="left:775px;top:354px;width:13px;height:12px"><div class="in"></div><svg style="left:-1px;top:-1px" width="13" height="12" viewBox="0 0 13 12" shape-rendering="crispEdges"><rect x="2" y="3" width="2" height="1" fill="#000"/><rect x="7" y="3" width="2" height="1" fill="#000"/><rect x="3" y="4" width="2" height="1" fill="#000"/><rect x="6" y="4" width="2" height="1" fill="#000"/><rect x="4" y="5" width="3" height="1" fill="#000"/><rect x="3" y="6" width="2" height="1" fill="#000"/><rect x="6" y="6" width="2" height="1" fill="#000"/><rect x="2" y="7" width="2" height="1" fill="#000"/><rect x="7" y="7" width="2" height="1" fill="#000"/></svg></div>
<svg style="left:620px;top:379px" width="12" height="5" viewBox="0 0 12 5" shape-rendering="crispEdges"><rect x="9" y="0" width="1" height="1" fill="#000"/><rect x="10" y="1" width="1" height="1" fill="#000"/><rect x="0" y="2" width="12" height="1" fill="#000"/><rect x="10" y="3" width="1" height="1" fill="#000"/><rect x="9" y="4" width="1" height="1" fill="#000"/></svg>
<div class="a" style="left:681px;top:380px;width:3px;height:3px;background:#000;"></div>
<svg style="left:689px;top:379px" width="11" height="5" viewBox="0 0 11 5" shape-rendering="crispEdges"><rect x="8" y="0" width="1" height="1" fill="#000"/><rect x="9" y="1" width="1" height="1" fill="#000"/><rect x="0" y="2" width="11" height="1" fill="#000"/><rect x="9" y="3" width="1" height="1" fill="#000"/><rect x="8" y="4" width="1" height="1" fill="#000"/></svg>
<div class="t" style="left:720px;top:375px;font-size:13px;text-align:center;width:70px;">Modifiers</div>
<div class="t" style="left:589px;top:398px;font-size:13px;text-align:center;width:70px;">float</div>
<div class="t" style="left:655px;top:398px;font-size:13px;text-align:center;width:70px;">complex</div>
<div class="t" style="left:720px;top:398px;font-size:13px;text-align:center;width:70px;">assume</div>
<div class="t" style="left:589px;top:421px;font-size:13px;text-align:center;width:70px;">solve</div>
<div class="t" style="left:655px;top:421px;font-size:13px;text-align:center;width:70px;">simplify</div>
<div class="t" style="left:720px;top:421px;font-size:13px;text-align:center;width:70px;">substitute</div>
<div class="t" style="left:589px;top:444px;font-size:13px;text-align:center;width:70px;">factor</div>
<div class="t" style="left:655px;top:444px;font-size:13px;text-align:center;width:70px;">expand</div>
<div class="t" style="left:720px;top:444px;font-size:13px;text-align:center;width:70px;">coeffs</div>
<div class="t" style="left:589px;top:467px;font-size:13px;text-align:center;width:70px;">collect</div>
<div class="t" style="left:655px;top:467px;font-size:13px;text-align:center;width:70px;">series</div>
<div class="t" style="left:720px;top:467px;font-size:13px;text-align:center;width:70px;">parfrac</div>
<div class="t" style="left:589px;top:490px;font-size:13px;text-align:center;width:70px;">fourier</div>
<div class="t" style="left:655px;top:490px;font-size:13px;text-align:center;width:70px;">laplace</div>
<div class="t" style="left:720px;top:490px;font-size:13px;text-align:center;width:70px;">ztrans</div>
<div class="t" style="left:589px;top:513px;font-size:13px;text-align:center;width:70px;">invfourier</div>
<div class="t" style="left:655px;top:513px;font-size:13px;text-align:center;width:70px;">invlaplace</div>
<div class="t" style="left:720px;top:513px;font-size:13px;text-align:center;width:70px;">invztrans</div>
<svg style="left:611px;top:539px" width="6" height="8" viewBox="0 0 6 8" shape-rendering="crispEdges"><rect x="0" y="0" width="1" height="1" fill="#000"/><rect x="5" y="0" width="1" height="1" fill="#000"/><rect x="0" y="1" width="2" height="1" fill="#000"/><rect x="4" y="1" width="2" height="1" fill="#000"/><rect x="0" y="2" width="1" height="1" fill="#000"/><rect x="2" y="2" width="2" height="1" fill="#000"/><rect x="5" y="2" width="1" height="1" fill="#000"/><rect x="0" y="3" width="1" height="1" fill="#000"/><rect x="2" y="3" width="2" height="1" fill="#000"/><rect x="5" y="3" width="1" height="1" fill="#000"/><rect x="0" y="4" width="1" height="1" fill="#000"/><rect x="5" y="4" width="1" height="1" fill="#000"/><rect x="0" y="5" width="1" height="1" fill="#000"/><rect x="5" y="5" width="1" height="1" fill="#000"/><rect x="0" y="6" width="1" height="1" fill="#000"/><rect x="5" y="6" width="1" height="1" fill="#000"/><rect x="0" y="7" width="1" height="1" fill="#000"/><rect x="5" y="7" width="1" height="1" fill="#000"/></svg>
<svg style="left:619px;top:536px" width="5" height="4" viewBox="0 0 5 4" shape-rendering="crispEdges"><rect x="0" y="0" width="5" height="1" fill="#000"/><rect x="2" y="1" width="1" height="1" fill="#000"/><rect x="2" y="2" width="1" height="1" fill="#000"/><rect x="2" y="3" width="1" height="1" fill="#000"/></svg>
<svg style="left:628px;top:540px" width="11" height="5" viewBox="0 0 11 5" shape-rendering="crispEdges"><rect x="8" y="0" width="1" height="1" fill="#000"/><rect x="9" y="1" width="1" height="1" fill="#000"/><rect x="0" y="2" width="11" height="1" fill="#000"/><rect x="9" y="3" width="1" height="1" fill="#000"/><rect x="8" y="4" width="1" height="1" fill="#000"/></svg>
<svg style="left:676px;top:539px" width="6" height="8" viewBox="0 0 6 8" shape-rendering="crispEdges"><rect x="0" y="0" width="1" height="1" fill="#000"/><rect x="5" y="0" width="1" height="1" fill="#000"/><rect x="0" y="1" width="2" height="1" fill="#000"/><rect x="4" y="1" width="2" height="1" fill="#000"/><rect x="0" y="2" width="1" height="1" fill="#000"/><rect x="2" y="2" width="2" height="1" fill="#000"/><rect x="5" y="2" width="1" height="1" fill="#000"/><rect x="0" y="3" width="1" height="1" fill="#000"/><rect x="2" y="3" width="2" height="1" fill="#000"/><rect x="5" y="3" width="1" height="1" fill="#000"/><rect x="0" y="4" width="1" height="1" fill="#000"/><rect x="5" y="4" width="1" height="1" fill="#000"/><rect x="0" y="5" width="1" height="1" fill="#000"/><rect x="5" y="5" width="1" height="1" fill="#000"/><rect x="0" y="6" width="1" height="1" fill="#000"/><rect x="5" y="6" width="1" height="1" fill="#000"/><rect x="0" y="7" width="1" height="1" fill="#000"/><rect x="5" y="7" width="1" height="1" fill="#000"/></svg>
<svg style="left:684px;top:535px" width="6" height="5" viewBox="0 0 6 5" shape-rendering="crispEdges"><rect x="4" y="0" width="2" height="1" fill="#000"/><rect x="3" y="1" width="3" height="1" fill="#000"/><rect x="0" y="2" width="3" height="1" fill="#000"/><rect x="5" y="2" width="1" height="1" fill="#000"/><rect x="5" y="3" width="1" height="1" fill="#000"/><rect x="5" y="4" width="1" height="1" fill="#000"/></svg>
<svg style="left:693px;top:540px" width="11" height="5" viewBox="0 0 11 5" shape-rendering="crispEdges"><rect x="8" y="0" width="1" height="1" fill="#000"/><rect x="9" y="1" width="1" height="1" fill="#000"/><rect x="0" y="2" width="11" height="1" fill="#000"/><rect x="9" y="3" width="1" height="1" fill="#000"/><rect x="8" y="4" width="1" height="1" fill="#000"/></svg>
<div class="a" style="left:740px;top:537px;width:1px;height:11px;background:#000;"></div>
<svg style="left:743px;top:539px" width="6" height="8" viewBox="0 0 6 8" shape-rendering="crispEdges"><rect x="0" y="0" width="1" height="1" fill="#000"/><rect x="5" y="0" width="1" height="1" fill="#000"/><rect x="0" y="1" width="2" height="1" fill="#000"/><rect x="4" y="1" width="2" height="1" fill="#000"/><rect x="0" y="2" width="1" height="1" fill="#000"/><rect x="2" y="2" width="2" height="1" fill="#000"/><rect x="5" y="2" width="1" height="1" fill="#000"/><rect x="0" y="3" width="1" height="1" fill="#000"/><rect x="2" y="3" width="2" height="1" fill="#000"/><rect x="5" y="3" width="1" height="1" fill="#000"/><rect x="0" y="4" width="1" height="1" fill="#000"/><rect x="5" y="4" width="1" height="1" fill="#000"/><rect x="0" y="5" width="1" height="1" fill="#000"/><rect x="5" y="5" width="1" height="1" fill="#000"/><rect x="0" y="6" width="1" height="1" fill="#000"/><rect x="5" y="6" width="1" height="1" fill="#000"/><rect x="0" y="7" width="1" height="1" fill="#000"/><rect x="5" y="7" width="1" height="1" fill="#000"/></svg>
<div class="a" style="left:751px;top:537px;width:1px;height:11px;background:#000;"></div>
<svg style="left:760px;top:540px" width="11" height="5" viewBox="0 0 11 5" shape-rendering="crispEdges"><rect x="8" y="0" width="1" height="1" fill="#000"/><rect x="9" y="1" width="1" height="1" fill="#000"/><rect x="0" y="2" width="11" height="1" fill="#000"/><rect x="9" y="3" width="1" height="1" fill="#000"/><rect x="8" y="4" width="1" height="1" fill="#000"/></svg>
</body></html>
